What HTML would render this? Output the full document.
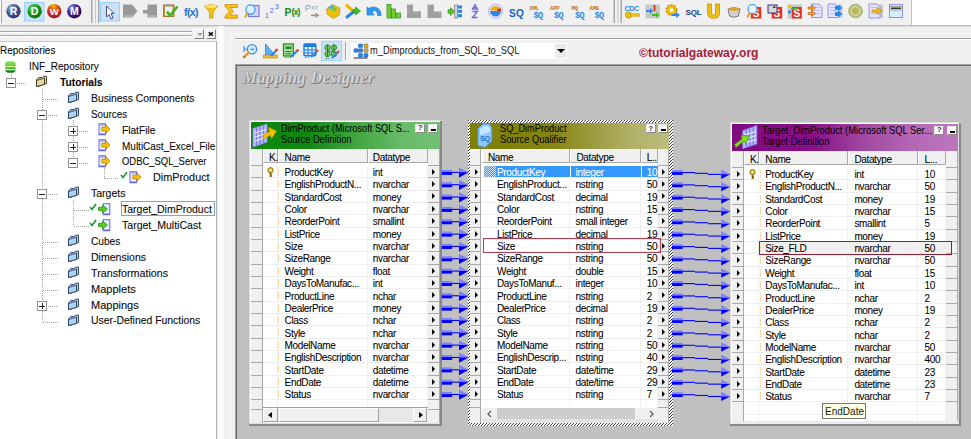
<!DOCTYPE html>
<html><head><meta charset="utf-8"><style>
*{margin:0;padding:0;box-sizing:border-box}
html,body{width:971px;height:439px;overflow:hidden}
body{background:#f0f0f0;position:relative;font-family:"Liberation Sans",sans-serif;color:#000}
.a{position:absolute}
.t{position:absolute;white-space:nowrap;line-height:1}
.tree{font-size:11px;letter-spacing:-0.3px;color:#1a1a1a}
.cell{font-size:10px;letter-spacing:-0.35px;color:#000;-webkit-text-stroke-width:0.07px}
.dh{position:absolute;height:1px;background-image:linear-gradient(90deg,#a0a0a0 50%,transparent 50%);background-size:2px 1px}
.dv{position:absolute;width:1px;background-image:linear-gradient(180deg,#a0a0a0 50%,transparent 50%);background-size:1px 2px}
</style></head>
<body>
<div class="a" style="left:0;top:0;width:912px;height:25px;background:#f0f0f0;border-right:1px solid #c4c4c4"></div>
<div class="a" style="left:912px;top:0;width:59px;height:25px;background:#fff"></div>
<div class="a" style="left:0;top:25px;width:971px;height:2px;background:#d8d8d8;border-top:1px solid #bcbcbc"></div>
<div class="a" style="left:0;top:0;width:2px;height:23px;border-right:1px solid #a8a8a8;background:#fafafa"></div>
<svg class="a" style="left:0;top:0" width="971" height="25"><defs><radialGradient id="bR" cx="35%" cy="30%" r="75%"><stop offset="0" stop-color="#a0b0d8"/><stop offset="0.5" stop-color="#4a5a9c"/><stop offset="1" stop-color="#2a3470"/></radialGradient><radialGradient id="bD" cx="35%" cy="30%" r="75%"><stop offset="0" stop-color="#60d060"/><stop offset="0.5" stop-color="#1a9a1a"/><stop offset="1" stop-color="#0a6a0a"/></radialGradient><radialGradient id="bW" cx="45%" cy="15%" r="80%"><stop offset="0" stop-color="#f0c000"/><stop offset="0.45" stop-color="#e04010"/><stop offset="1" stop-color="#a01830"/></radialGradient><radialGradient id="bM" cx="30%" cy="25%" r="80%"><stop offset="0" stop-color="#8090f0"/><stop offset="0.5" stop-color="#40208a"/><stop offset="1" stop-color="#2a0a5a"/></radialGradient></defs><rect x="24.5" y="2.5" width="19.5" height="18.5" fill="#c9e0f7" stroke="#99d1ff"/><rect x="100.5" y="2.5" width="19" height="18.5" fill="#c9e0f7" stroke="#99d1ff"/><circle cx="13.5" cy="11.2" r="7.2" fill="url(#bR)"/><text x="13.5" y="15.3" text-anchor="middle" font-family="Liberation Sans" font-weight="bold" font-size="10.5" fill="#fff">R</text><circle cx="34.6" cy="11.2" r="7.2" fill="url(#bD)"/><text x="34.6" y="15.3" text-anchor="middle" font-family="Liberation Sans" font-weight="bold" font-size="10.5" fill="#fff">D</text><circle cx="54.2" cy="11.2" r="7.2" fill="url(#bW)"/><text x="54.2" y="15.3" text-anchor="middle" font-family="Liberation Sans" font-weight="bold" font-size="9.5" fill="#fff">W</text><circle cx="74.3" cy="11.2" r="7.2" fill="url(#bM)"/><text x="74.3" y="15.3" text-anchor="middle" font-family="Liberation Sans" font-weight="bold" font-size="10.5" fill="#fff">M</text><rect x="91" y="0" width="1.5" height="23" fill="#a8a8a8"/><rect x="98" y="0" width="1.5" height="23" fill="#a8a8a8"/><rect x="613.5" y="0" width="1.5" height="23" fill="#a8a8a8"/><rect x="620.5" y="0" width="1.5" height="23" fill="#a8a8a8"/><rect x="95" y="0" width="1" height="23" fill="#c8c8c8"/><rect x="617.5" y="0" width="1" height="23" fill="#c8c8c8"/><path d="M106.5 6 L106.5 17 L109 14.5 L111 19 L113 18 L111 13.5 L114 13.5 Z" fill="#fff" stroke="#3a3a7a" stroke-width="0.9"/><path d="M123 4.5 H132 L137.5 11 L132 17.5 H123 Z" fill="#999"/><rect x="125" y="15.5" width="1.5" height="1" fill="#eee"/><rect x="127.5" y="15.5" width="1.5" height="1" fill="#eee"/><rect x="130" y="15.5" width="1.5" height="1" fill="#eee"/><path d="M147.5 4.5 H157 V17.5 H147.5 V13.5 H143 V10 H147.5 Z" fill="#999"/><rect x="149" y="15.5" width="1.5" height="1" fill="#eee"/><rect x="151.5" y="15.5" width="1.5" height="1" fill="#eee"/><rect x="154" y="15.5" width="1.5" height="1" fill="#eee"/><rect x="163.5" y="5" width="10.5" height="11.5" fill="#d89030" stroke="#a06010" stroke-width="0.8"/><rect x="165" y="6.5" width="7.5" height="9" fill="#e8f4ff"/><rect x="166" y="4" width="5.5" height="2.5" fill="#a0a0a0"/><path d="M167 11.5 L170 15.5 L177.5 6.5" fill="none" stroke="#40b020" stroke-width="2.6"/><text x="184" y="15.5" font-family="Liberation Sans" font-weight="bold" font-size="10.5" fill="#1a6fd8" letter-spacing="-0.6">f(x)</text><path d="M204.5 6 Q211 3 218 6 L213 12 V18 H209.5 V12 Z" fill="#f2c21a" stroke="#c09000" stroke-width="0.7"/><ellipse cx="211.2" cy="6.3" rx="6" ry="1.8" fill="#ffe070"/><path d="M225 4.5 H237.5 V7.5 H230 L233.5 11.3 L230 15 H237.5 V18.2 H225 V16 L229.5 11.3 L225 6.5 Z" fill="#f5c518" stroke="#d08000" stroke-width="0.7"/><rect x="248.5" y="5.5" width="10.5" height="11" fill="#d8d8ff" stroke="#7878f0" stroke-width="1.2"/><circle cx="250.5" cy="9.5" r="4.6" fill="#d8f0ff" stroke="#3a98f0" stroke-width="1.2"/><path d="M247.5 12.5 L245 17.5" stroke="#e0a020" stroke-width="2"/><text x="265" y="18" font-family="Liberation Sans" font-size="7" fill="#6060e0">1</text><text x="269.8" y="13.3" font-family="Liberation Sans" font-size="7" fill="#6060e0">2</text><text x="275" y="9" font-family="Liberation Sans" font-size="7" fill="#6060e0">3</text><text x="284.5" y="15.6" font-family="Liberation Sans" font-weight="bold" font-size="10.5" fill="#1a8a1a">P</text><text x="291.5" y="15.3" font-family="Liberation Sans" font-weight="bold" font-size="9" fill="#1a8a1a" letter-spacing="-1">(x)</text><text x="305" y="10.8" font-family="Liberation Sans" font-size="8.5" fill="#9a9a9a">P</text><text x="311" y="10" font-family="Liberation Sans" font-size="5.5" fill="#9a9a9a">XT</text><path d="M311 14.5 H315.5 V12.5 L319.5 15.3 L315.5 18 V16.2 H311 Z" fill="#9a9a9a"/><path d="M326.5 9 L332 4.5 L340 8 L339.5 15 L333 18.5 L327 14 Z" fill="#f0c010" stroke="#c08800" stroke-width="0.6"/><path d="M328 8 L332 5 L334.5 6 L331 9.5 Z" fill="#4aa8f0"/><path d="M333 7 L337 8.5 L335 12 L331.5 10.5 Z" fill="#70d030"/><path d="M347 5.5 L354 12" stroke="#f0b800" stroke-width="3.2" stroke-linecap="round"/><path d="M347 17 L354 11.5" stroke="#2a88e8" stroke-width="3.2" stroke-linecap="round"/><path d="M353 9.5 H355.5 V7 L360.5 11 L355.5 15 V12.5 H353 Z" fill="#40c020" stroke="#1a7a10" stroke-width="0.6"/><path d="M381 15.5 Q381 7 373 7 Q370 7 369.5 8.5 L367 7 V15 H374.5 L372 13 Q372.5 10.5 374.5 10.5 Q377.5 10.5 377.5 15.5 Z" fill="#2a98f0" stroke="#1a70d0" stroke-width="0.6"/><rect x="387" y="4.5" width="4" height="13.5" fill="#70d030" stroke="#2a8a10" stroke-width="0.7"/><rect x="391.5" y="9" width="4" height="9" fill="#70d030" stroke="#2a8a10" stroke-width="0.7"/><rect x="396" y="13" width="4.5" height="5" fill="#70d030" stroke="#2a8a10" stroke-width="0.7"/><path d="M407 4.5 H413 V11.5 H418 L419.5 10.5 L421 12 V18 H407 Z" fill="#a0a0a0"/><path d="M427.5 4.5 H434 V11.5 H441.5 V18 H427.5 Z" fill="#a0a0a0"/><path d="M448 9.8 H450.5 V7.5 L454.5 11.5 L450.5 15.5 V13.3 H448 Z" fill="#50c820" stroke="#1a8a10" stroke-width="0.6"/><rect x="454.5" y="5" width="3.2" height="13" fill="#d0d0d0" stroke="#707070" stroke-width="0.6"/><rect x="457.8" y="5.5" width="4.2" height="3" fill="#2a88e8"/><rect x="457.8" y="9.8" width="4.2" height="3" fill="#2a88e8"/><rect x="457.8" y="14.2" width="4.2" height="3" fill="#2a88e8"/><path d="M472.5 9 L475 4.5 L477.5 9 Z" fill="none" stroke="#6a6ad8" stroke-width="1.3"/><rect x="473" y="7" width="4" height="1" fill="#6a6ad8"/><path d="M472.5 11.5 H477.5 L472.5 17.5 H477.5" fill="none" stroke="#6a6ad8" stroke-width="1.3"/><circle cx="495.5" cy="11.2" r="7" fill="#e8e8ff" stroke="#b0b0ff" stroke-width="1"/><path d="M490 10.5 Q491 6 495.5 6 Q500 6 501 10.5 Z" fill="#f0b010"/><path d="M497 9 L501 8.5 L501 11.5 L497 11 Z" fill="#e03010"/><path d="M490 11 H501 Q500.5 16 495.5 16.5 Q490.5 16 490 11 Z" fill="#2a88e8"/><text x="509" y="16.5" font-family="Liberation Sans" font-weight="bold" font-size="10" fill="#1060c8" letter-spacing="0.3">SQ</text><text x="529.5" y="9.8" font-family="Liberation Mono" font-weight="bold" font-size="5.6" fill="#c07020" letter-spacing="-0.2">XML</text><text x="533.5" y="17.6" font-family="Liberation Mono" font-weight="bold" font-size="8.5" fill="#2a88e0" letter-spacing="-0.5">$Q</text><text x="550" y="9.8" font-family="Liberation Mono" font-weight="bold" font-size="5.6" fill="#c07020" letter-spacing="-0.2">APP</text><text x="554" y="17.6" font-family="Liberation Mono" font-weight="bold" font-size="8.5" fill="#2a88e0" letter-spacing="-0.5">$Q</text><text x="571.5" y="9.8" font-family="Liberation Mono" font-weight="bold" font-size="5.6" fill="#c07020" letter-spacing="-0.2">MQ</text><text x="575" y="17.6" font-family="Liberation Mono" font-weight="bold" font-size="8.5" fill="#2a88e0" letter-spacing="-0.5">$Q</text><text x="589.5" y="9.8" font-family="Liberation Mono" font-weight="bold" font-size="5.6" fill="#c07020" letter-spacing="-0.2">AMG</text><text x="594.5" y="17.6" font-family="Liberation Mono" font-weight="bold" font-size="8.5" fill="#2a88e0" letter-spacing="-0.5">$Q</text><text x="624.5" y="10.5" font-family="Liberation Sans" font-weight="bold" font-size="7" fill="#2a80e0" letter-spacing="-0.3">CDC</text><circle cx="628.5" cy="15" r="3.2" fill="#f0c010" stroke="#c08800" stroke-width="0.6"/><rect x="631" y="13.8" width="8.5" height="2.4" fill="#f0c010" stroke="#c08800" stroke-width="0.5"/><rect x="645.5" y="4.5" width="14.5" height="13.8" fill="#c8c8c8"/><path d="M646 10 H650 V8 L653 11 L650 14 V12 H646 Z" fill="#2a88e8"/><path d="M654.5 5 V11" stroke="#e03010" stroke-width="1.8"/><path d="M652 14 H656 V12 L659.5 15 L656 18 V16 H652 Z" fill="#40c020"/><circle cx="671.5" cy="10" r="5.2" fill="#f0c010" stroke="#c08800" stroke-width="1.4" stroke-dasharray="2 1.3"/><circle cx="671.5" cy="10" r="1.8" fill="#fff"/><path d="M672 14 H676 V12 L680 15 L676 18 V16 H672 Z" fill="#2a88e8"/><text x="685.5" y="14.8" font-family="Liberation Sans" font-weight="bold" font-size="8" fill="#1a3a8a" letter-spacing="-0.2">SQL</text><path d="M707.5 4 H711.5 V13.5 Q711.5 15 713.5 15 Q715.5 15 715.5 13.5 V4 H719.5 V13 Q719.5 18.3 713.5 18.3 Q707.5 18.3 707.5 13 Z" fill="#f0c010" stroke="#c08800" stroke-width="0.7"/><path d="M728 9 Q734 6 740 9 L738.5 16 Q734 18.5 729.5 16 Z" fill="#d0d0d0" stroke="#606060" stroke-width="0.8"/><ellipse cx="734" cy="9" rx="5" ry="1.8" fill="#e0a020"/><rect x="750.8" y="7" width="10.5" height="11.5" fill="#e83020"/><text x="756.05" y="17.0" text-anchor="middle" font-family="Liberation Sans" font-weight="bold" font-size="10" fill="#fff">S</text><circle cx="752.5" cy="9" r="4.5" fill="#e8f4ff" stroke="#3a98f0" stroke-width="1.2"/><path d="M749.5 12.5 L747.5 17.5" stroke="#e0a020" stroke-width="2"/><rect x="771.7" y="7" width="10.5" height="11.5" fill="#e83020"/><text x="776.95" y="17.0" text-anchor="middle" font-family="Liberation Sans" font-weight="bold" font-size="10" fill="#fff">S</text><rect x="768" y="5" width="9" height="8" fill="#d8d8d8" stroke="#30307a" stroke-width="1"/><rect x="773" y="6.5" width="2.5" height="1.2" fill="#000"/><rect x="787.7" y="4.5" width="14" height="14" fill="#c8c8c8"/><rect x="791.8" y="7" width="10" height="11.5" fill="#e83020"/><text x="796.8" y="17.0" text-anchor="middle" font-family="Liberation Sans" font-weight="bold" font-size="10" fill="#fff">S</text><circle cx="789.5" cy="6.5" r="1.8" fill="#f0c010"/><circle cx="789.5" cy="12" r="1.8" fill="#2a98f0"/><path d="M791 8 H795 V6 L798 8.5 L795 11 V9.5 H791 Z" fill="#40c020"/><path d="M811.5 4 H819.0 L822.0 7 V17.5 H811.5 Z" fill="#e4e4ff" stroke="#8a8ae8" stroke-width="0.9"/><rect x="813.5" y="7.0" width="6.5" height="0.8" fill="#b0b0f0"/><rect x="813.5" y="10.2" width="6.5" height="0.8" fill="#b0b0f0"/><rect x="813.5" y="13.4" width="6.5" height="0.8" fill="#b0b0f0"/><path d="M808 7 H812 V5.3 L815.5 8 L812 10.7 V9 H808 Z" fill="#f0b010" stroke="#c03010" stroke-width="0.5"/><path d="M808 12.5 H812 V10.8 L815.5 13.5 L812 16.2 V14.5 H808 Z" fill="#f0b010" stroke="#c03010" stroke-width="0.5"/><path d="M828 4 H835.5 L838.5 7 V17.5 H828 Z" fill="#e4e4ff" stroke="#8a8ae8" stroke-width="0.9"/><rect x="830" y="7.0" width="6.5" height="0.8" fill="#b0b0f0"/><rect x="830" y="10.2" width="6.5" height="0.8" fill="#b0b0f0"/><rect x="830" y="13.4" width="6.5" height="0.8" fill="#b0b0f0"/><rect x="838.5" y="4.5" width="4" height="13" fill="#c8c8c8"/><path d="M835 6 H838 V4.5 L842.5 8 L838 11.3 V9.8 H835 Z" fill="#2a88e8"/><path d="M835 12 H838 V10.5 L842.5 14 L838 17.5 V16 H835 Z" fill="#2a88e8"/><circle cx="855.5" cy="11" r="6.8" fill="#c0c080" stroke="#a0b070" stroke-width="1"/><circle cx="855.5" cy="11" r="4.2" fill="#b8b860" stroke="#f0f0d0" stroke-width="0.7"/><rect x="877" y="4.5" width="6" height="13.5" fill="#c8c8c8"/><path d="M869 4 H877 L880 7 V18 H869 Z" fill="#e4e4ff" stroke="#8a8ae8" stroke-width="0.9"/><rect x="871" y="7.0" width="7" height="0.8" fill="#b0b0f0"/><rect x="871" y="10.2" width="7" height="0.8" fill="#b0b0f0"/><rect x="871" y="13.4" width="7" height="0.8" fill="#b0b0f0"/><path d="M872 10 H877 V7.5 L882.5 11 L877 14.5 V12.3 H872 Z" fill="#f0b810" stroke="#c08000" stroke-width="0.5"/><rect x="889.5" y="4.5" width="13" height="13" fill="#d4ecfc" stroke="#8a8ae8" stroke-width="0.9"/><rect x="889.5" y="6.5" width="13" height="3.5" fill="#e8e8e8" stroke="#707070" stroke-width="0.6"/><rect x="891" y="7.5" width="10" height="1.5" fill="#303030"/></svg>
<div class="a" style="left:0;top:31px;width:192px;height:2px;border-top:1px solid #a8a8a8;border-bottom:1px solid #fff"></div>
<div class="a" style="left:0;top:35px;width:192px;height:2px;border-top:1px solid #a8a8a8;border-bottom:1px solid #fff"></div>
<div class="a" style="left:194px;top:29px;width:10px;height:10px;background:#f0f0f0;border-right:1px solid #808080;border-bottom:1px solid #808080;border-left:1px solid #fff;border-top:1px solid #fff"></div>
<div class="a" style="left:197px;top:33px;width:0;height:0;border-left:3px solid transparent;border-right:3px solid transparent;border-top:3px solid #a0a0a0"></div>
<div class="a" style="left:206px;top:29px;width:10px;height:10px;background:#f0f0f0;border-right:1px solid #808080;border-bottom:1px solid #808080;border-left:1px solid #fff;border-top:1px solid #fff"></div>
<svg class="a" style="left:207px;top:30px" width="8" height="8" viewBox="0 0 8 8"><path d="M1.8 2.2 L5.8 5.8 M5.8 2.2 L1.8 5.8" stroke="#000" stroke-width="1.5"/></svg>
<div class="a" style="left:0;top:41px;width:217px;height:398px;background:#fff;border-top:1px solid #c8c8c8;border-right:1px solid #b0b0b0"></div>
<div class="a" style="left:218px;top:26px;width:6px;height:413px;background:#fbfbfb"></div>
<div class="a" style="left:230px;top:33px;width:741px;height:406px;background:#f0f0f0;border-left:1px solid #fafafa;border-top:1px solid #fafafa"></div>
<div class="a" style="left:235px;top:38px;width:736px;height:1px;background:#a0a0a0"></div>
<div class="a" style="left:235px;top:39px;width:736px;height:1px;background:#fff"></div>
<div class="a" style="left:345px;top:42px;width:2px;height:18px;border-left:1px solid #a0a0a0;border-right:1px solid #fff"></div>
<div class="a" style="left:351px;top:43px;width:216px;height:16px;background:#fff"></div>
<div class="a" style="left:555px;top:44px;width:11px;height:14px;background:#eaeaea"></div>
<div class="a" style="left:557px;top:49px;width:0;height:0;border-left:4px solid transparent;border-right:4px solid transparent;border-top:4px solid #000"></div>
<div class="t" style="left:369.50px;top:45.00px;font-size:11px;transform:scaleX(0.8461);transform-origin:0 0;color:#111">m_Dimproducts_from_SQL_to_SQL</div>
<div class="t" style="left:638.50px;top:46.00px;font-size:13px;transform:scaleX(0.9298);transform-origin:0 0;color:#a3203c;font-weight:bold">&copy;tutorialgateway.org</div>
<svg class="a" style="left:0;top:0" width="971" height="64"><circle cx="252" cy="49.3" r="4.6" fill="#d8f0ff" stroke="#3a8ae0" stroke-width="1.3"/><path d="M250 49.3 H253.5 M252.2 47.8 L253.8 49.3 L252.2 50.8" stroke="#3a8ae0" stroke-width="0.9" fill="none"/><rect x="243.5" y="46" width="1.2" height="6" fill="#3a8ae0"/><rect x="244" y="48.8" width="3.5" height="1" fill="#3a8ae0"/><path d="M243.5 57.5 L249.5 52" stroke="#e0a020" stroke-width="2.4"/><path d="M243.2 57.8 L244.5 56.5" stroke="#7a6a30" stroke-width="1.2"/><path d="M265.5 44 V55 H274.5 Z" fill="#60b0f8" stroke="#2a80e0" stroke-width="0.8"/><rect x="263.5" y="55" width="14" height="3" fill="#f0c030" stroke="#c08000" stroke-width="0.6"/><path d="M271 56 L277 49.5" stroke="#2a88e8" stroke-width="2.2"/><path d="M275.5 51 L277.5 49" stroke="#e05020" stroke-width="2.2"/><rect x="283.5" y="44" width="9.8" height="12" fill="#a8e0a0" stroke="#1a8a1a" stroke-width="1.2"/><rect x="285.5" y="46.5" width="5.8" height="2.5" fill="#1a8a1a"/><rect x="285.5" y="51" width="5.8" height="1" fill="#1a8a1a"/><rect x="285.5" y="53.3" width="5.8" height="1" fill="#1a8a1a"/><path d="M291.5 56.5 L298 50" stroke="#2a88e8" stroke-width="2.2"/><path d="M296.5 51.5 L298.5 49.5" stroke="#e05020" stroke-width="2.2"/><rect x="285" y="57" width="1" height="1" fill="#666"/><rect x="287.5" y="57" width="1" height="1" fill="#666"/><rect x="290" y="57" width="1" height="1" fill="#333"/><rect x="304" y="44" width="11.8" height="11.8" rx="1" fill="#e8f0ff" stroke="#1a7ae0" stroke-width="1.4"/><rect x="304" y="44" width="11.8" height="3" fill="#1a7ae0"/><path d="M304 50 H316 M304 53 H316 M308 47 V56 M312 47 V56" stroke="#1a7ae0" stroke-width="1"/><path d="M311 57 L317.5 50.5" stroke="#2a88e8" stroke-width="2.2"/><path d="M316 52 L318 50" stroke="#e05020" stroke-width="2.2"/><rect x="305" y="57" width="1" height="1" fill="#666"/><rect x="307.5" y="57" width="1" height="1" fill="#666"/><rect x="321.7" y="41.3" width="20" height="19.3" fill="#c9e0f7" stroke="#99d1ff" stroke-width="1"/><circle cx="327.5" cy="47.5" r="2.6" fill="#80d060" stroke="#1a8a1a" stroke-width="1"/><circle cx="334" cy="47.5" r="2.6" fill="#80d060" stroke="#1a8a1a" stroke-width="1"/><circle cx="327.5" cy="54" r="2.6" fill="#80d060" stroke="#1a8a1a" stroke-width="1"/><circle cx="334" cy="54" r="2.6" fill="#80d060" stroke="#1a8a1a" stroke-width="1"/><path d="M327.5 44.5 V57 M334 44.5 V53 M327.5 51 H334" stroke="#1a8a1a" stroke-width="1"/><path d="M332 58 L338.5 51.5" stroke="#2a88e8" stroke-width="2.2"/><path d="M337 53 L339 51" stroke="#e05020" stroke-width="2.2"/><rect x="326" y="58" width="1" height="1" fill="#333"/><rect x="328.5" y="58" width="1" height="1" fill="#666"/><rect x="354.5" y="52" width="13.5" height="6" fill="none"/><rect x="358.5" y="44.0" width="4" height="3.6" rx="0.6" fill="#2a88e8" stroke="#1a58a8" stroke-width="0.5"/><rect x="364" y="44.0" width="4" height="3.6" rx="0.6" fill="#f0b010" stroke="#1a58a8" stroke-width="0.5"/><rect x="354" y="48.7" width="4" height="3.6" rx="0.6" fill="#2a88e8" stroke="#1a58a8" stroke-width="0.5"/><rect x="358.5" y="48.7" width="4" height="3.6" rx="0.6" fill="#2a88e8" stroke="#1a58a8" stroke-width="0.5"/><rect x="364" y="48.7" width="4" height="3.6" rx="0.6" fill="#f0b010" stroke="#1a58a8" stroke-width="0.5"/><rect x="358.5" y="53.400000000000006" width="4" height="3.6" rx="0.6" fill="#2a88e8" stroke="#1a58a8" stroke-width="0.5"/><rect x="364" y="53.400000000000006" width="4" height="3.6" rx="0.6" fill="#2a88e8" stroke="#1a58a8" stroke-width="0.5"/><rect x="353.5" y="57.5" width="14" height="1" fill="#222"/></svg>
<div class="a" style="left:235px;top:64px;width:736px;height:375px;background:#c0c0c0;border-left:1px solid #a0a0a0;border-top:1px solid #a0a0a0"></div>
<div class="a" style="left:236px;top:65px;width:735px;height:374px;border-left:1px solid #696969;border-top:1px solid #696969"></div>
<div class="t" style="left:242.5px;top:70px;font-family:'Liberation Serif',serif;font-style:italic;font-weight:bold;font-size:16px;letter-spacing:0.55px;color:#dedede;-webkit-text-stroke:0.3px #9a9a9a;text-shadow:1px 1px 0 #7a7a7a">Mapping Designer</div>
<div class="dv" style="left:11px;top:72px;height:6px"></div>
<div class="dv" style="left:42px;top:89px;height:232.6px"></div>
<div class="dv" style="left:73px;top:120px;height:42.6px"></div>
<div class="dv" style="left:104px;top:168px;height:10.5px"></div>
<div class="dv" style="left:73px;top:200px;height:26.2px"></div>
<div class="t" style="left:-0.30px;top:45.10px;font-size:11px;transform:scaleX(0.9061);transform-origin:0 0;color:#0a0a0a;-webkit-text-stroke-width:0.1px;font-weight:normal">Repositories</div>
<div class="t" style="left:29.20px;top:61.00px;font-size:11px;transform:scaleX(0.9134);transform-origin:0 0;color:#0a0a0a;-webkit-text-stroke-width:0.1px;font-weight:normal">INF_Repository</div>
<svg class="a" style="left:5px;top:61px" width="11" height="12" viewBox="0 0 11 12"><ellipse cx="5.5" cy="9.5" rx="5" ry="2.3" fill="#1e7a1e"/><rect x="0.5" y="2.5" width="10" height="7" fill="#3cb43c"/><rect x="0.5" y="5" width="10" height="1.2" fill="#e8f5a0"/><rect x="0.5" y="8" width="10" height="1.2" fill="#e8f5a0"/><ellipse cx="5.5" cy="2.5" rx="5" ry="2.2" fill="#7ad84a"/></svg>
<div class="t" style="left:60.20px;top:76.90px;font-size:11px;transform:scaleX(0.9313);transform-origin:0 0;color:#0a0a0a;-webkit-text-stroke-width:0.1px;font-weight:bold">Tutorials</div>
<div class="a" style="left:6px;top:78px;width:10px;height:10px;border:1px solid #939393;background:#fff"></div><div class="a" style="left:8px;top:82.5px;width:6px;height:1px;background:#222"></div>
<div class="dh" style="left:17px;top:83px;width:10px"></div>
<svg class="a" style="left:35px;top:75.1px" width="13" height="13" viewBox="0 0 13 13"><path d="M1.5 4.5 L4 2.5 L7 2.5 L8 1.5 L11.5 1 L11.5 8.5 L3 11.5 L1.5 11.5 Z" fill="#e4d9a0" stroke="#3a3420" stroke-width="0.9"/><path d="M1.5 5.5 L9.5 3 L9.5 9.5 L1.5 11.5 Z" fill="#e4d9a0" stroke="#3a3420" stroke-width="0.9"/></svg>
<div class="t" style="left:90.70px;top:92.80px;font-size:11px;transform:scaleX(0.9386);transform-origin:0 0;color:#0a0a0a;-webkit-text-stroke-width:0.1px;font-weight:normal">Business Components</div>
<div class="dh" style="left:43px;top:99px;width:15px"></div>
<svg class="a" style="left:67px;top:91.0px" width="13" height="13" viewBox="0 0 13 13"><path d="M1.5 4.5 L4 2.5 L7 2.5 L8 1.5 L11.5 1 L11.5 8.5 L3 11.5 L1.5 11.5 Z" fill="#a9d3f5" stroke="#2a3a5a" stroke-width="0.9"/><path d="M1.5 5.5 L9.5 3 L9.5 9.5 L1.5 11.5 Z" fill="#a9d3f5" stroke="#2a3a5a" stroke-width="0.9"/></svg>
<div class="t" style="left:90.70px;top:108.70px;font-size:11px;transform:scaleX(0.8946);transform-origin:0 0;color:#0a0a0a;-webkit-text-stroke-width:0.1px;font-weight:normal">Sources</div>
<div class="a" style="left:37px;top:110px;width:10px;height:10px;border:1px solid #939393;background:#fff"></div><div class="a" style="left:39px;top:114.5px;width:6px;height:1px;background:#222"></div>
<div class="dh" style="left:48px;top:115px;width:10px"></div>
<svg class="a" style="left:67px;top:106.9px" width="13" height="13" viewBox="0 0 13 13"><path d="M1.5 4.5 L4 2.5 L7 2.5 L8 1.5 L11.5 1 L11.5 8.5 L3 11.5 L1.5 11.5 Z" fill="#a9d3f5" stroke="#2a3a5a" stroke-width="0.9"/><path d="M1.5 5.5 L9.5 3 L9.5 9.5 L1.5 11.5 Z" fill="#a9d3f5" stroke="#2a3a5a" stroke-width="0.9"/></svg>
<div class="t" style="left:121.70px;top:124.60px;font-size:11px;transform:scaleX(0.9234);transform-origin:0 0;color:#0a0a0a;-webkit-text-stroke-width:0.1px;font-weight:normal">FlatFile</div>
<div class="a" style="left:68px;top:126px;width:10px;height:10px;border:1px solid #939393;background:#fff"></div><div class="a" style="left:70px;top:130.5px;width:6px;height:1px;background:#222"></div><div class="a" style="left:72.5px;top:128px;width:1px;height:6px;background:#222"></div>
<div class="dh" style="left:79px;top:131px;width:10px"></div>
<svg class="a" style="left:97.5px;top:123.20000000000002px" width="13" height="13" viewBox="0 0 13 13"><rect x="1" y="0.7" width="6.6" height="11" fill="#e8f4ff" stroke="#7272ea" stroke-width="1.1"/><rect x="1" y="10.6" width="6.6" height="1.2" fill="#5a5ad8"/><path d="M2 1.3 H7 M2 2.3 H7" stroke="#8a8aee" stroke-width="0.6"/><path d="M3.8 4 H8 V1.8 L12 6 L8 10.2 V8 H3.8 Z" fill="#f4c010" stroke="#c07a00" stroke-width="0.7"/></svg>
<div class="t" style="left:121.70px;top:140.50px;font-size:11px;transform:scaleX(0.9084);transform-origin:0 0;color:#0a0a0a;-webkit-text-stroke-width:0.1px;font-weight:normal">MultiCast_Excel_File</div>
<div class="a" style="left:68px;top:142px;width:10px;height:10px;border:1px solid #939393;background:#fff"></div><div class="a" style="left:70px;top:146.5px;width:6px;height:1px;background:#222"></div><div class="a" style="left:72.5px;top:144px;width:1px;height:6px;background:#222"></div>
<div class="dh" style="left:79px;top:147px;width:10px"></div>
<svg class="a" style="left:97.5px;top:139.1px" width="13" height="13" viewBox="0 0 13 13"><rect x="1" y="0.7" width="6.6" height="11" fill="#e8f4ff" stroke="#7272ea" stroke-width="1.1"/><rect x="1" y="10.6" width="6.6" height="1.2" fill="#5a5ad8"/><path d="M2 1.3 H7 M2 2.3 H7" stroke="#8a8aee" stroke-width="0.6"/><path d="M3.8 4 H8 V1.8 L12 6 L8 10.2 V8 H3.8 Z" fill="#f4c010" stroke="#c07a00" stroke-width="0.7"/></svg>
<div class="t" style="left:121.70px;top:156.40px;font-size:11px;transform:scaleX(0.8575);transform-origin:0 0;color:#0a0a0a;-webkit-text-stroke-width:0.1px;font-weight:normal">ODBC_SQL_Server</div>
<div class="a" style="left:68px;top:158px;width:10px;height:10px;border:1px solid #939393;background:#fff"></div><div class="a" style="left:70px;top:162.5px;width:6px;height:1px;background:#222"></div>
<div class="dh" style="left:79px;top:163px;width:10px"></div>
<svg class="a" style="left:97.5px;top:155.0px" width="13" height="13" viewBox="0 0 13 13"><rect x="1" y="0.7" width="6.6" height="11" fill="#e8f4ff" stroke="#7272ea" stroke-width="1.1"/><rect x="1" y="10.6" width="6.6" height="1.2" fill="#5a5ad8"/><path d="M2 1.3 H7 M2 2.3 H7" stroke="#8a8aee" stroke-width="0.6"/><path d="M3.8 4 H8 V1.8 L12 6 L8 10.2 V8 H3.8 Z" fill="#f4c010" stroke="#c07a00" stroke-width="0.7"/></svg>
<div class="t" style="left:152.70px;top:172.30px;font-size:11px;transform:scaleX(0.9850);transform-origin:0 0;color:#0a0a0a;-webkit-text-stroke-width:0.1px;font-weight:normal">DimProduct</div>
<div class="dh" style="left:105px;top:178px;width:14px"></div>
<svg class="a" style="left:119.5px;top:170.9px" width="8" height="8" viewBox="0 0 8 8"><path d="M1 4 L3 6.5 L7 1" fill="none" stroke="#1a9a2a" stroke-width="1.6"/></svg>
<svg class="a" style="left:128.5px;top:170.9px" width="13" height="13" viewBox="0 0 13 13"><rect x="1" y="0.7" width="6.6" height="11" fill="#e8f4ff" stroke="#7272ea" stroke-width="1.1"/><rect x="1" y="10.6" width="6.6" height="1.2" fill="#5a5ad8"/><path d="M2 1.3 H7 M2 2.3 H7" stroke="#8a8aee" stroke-width="0.6"/><path d="M3.8 4 H8 V1.8 L12 6 L8 10.2 V8 H3.8 Z" fill="#f4c010" stroke="#c07a00" stroke-width="0.7"/></svg>
<div class="t" style="left:90.70px;top:188.20px;font-size:11px;transform:scaleX(0.9564);transform-origin:0 0;color:#0a0a0a;-webkit-text-stroke-width:0.1px;font-weight:normal">Targets</div>
<div class="a" style="left:37px;top:189px;width:10px;height:10px;border:1px solid #939393;background:#fff"></div><div class="a" style="left:39px;top:193.5px;width:6px;height:1px;background:#222"></div>
<div class="dh" style="left:48px;top:194px;width:10px"></div>
<svg class="a" style="left:67px;top:186.4px" width="13" height="13" viewBox="0 0 13 13"><path d="M1.5 4.5 L4 2.5 L7 2.5 L8 1.5 L11.5 1 L11.5 8.5 L3 11.5 L1.5 11.5 Z" fill="#a9d3f5" stroke="#2a3a5a" stroke-width="0.9"/><path d="M1.5 5.5 L9.5 3 L9.5 9.5 L1.5 11.5 Z" fill="#a9d3f5" stroke="#2a3a5a" stroke-width="0.9"/></svg>
<div class="t" style="left:121.70px;top:204.10px;font-size:11px;transform:scaleX(0.9538);transform-origin:0 0;color:#0a0a0a;-webkit-text-stroke-width:0.1px;font-weight:normal">Target_DimProduct</div>
<div class="dh" style="left:74px;top:210px;width:15px"></div>
<svg class="a" style="left:88.5px;top:202.70000000000002px" width="8" height="8" viewBox="0 0 8 8"><path d="M1 4 L3 6.5 L7 1" fill="none" stroke="#1a9a2a" stroke-width="1.6"/></svg>
<svg class="a" style="left:97.5px;top:202.70000000000002px" width="13" height="13" viewBox="0 0 13 13"><rect x="5.2" y="0.7" width="6.6" height="11" fill="#e8f4ff" stroke="#7272ea" stroke-width="1.1"/><rect x="5.2" y="10.6" width="6.6" height="1.2" fill="#5a5ad8"/><path d="M0.5 4.3 H4.5 V2 L9.5 6 L4.5 10 V7.7 H0.5 Z" fill="#5cc820" stroke="#1a8a10" stroke-width="0.7"/></svg>
<div class="t" style="left:121.70px;top:220.00px;font-size:11px;transform:scaleX(0.9584);transform-origin:0 0;color:#0a0a0a;-webkit-text-stroke-width:0.1px;font-weight:normal">Target_MultiCast</div>
<div class="dh" style="left:74px;top:226px;width:15px"></div>
<svg class="a" style="left:88.5px;top:218.6px" width="8" height="8" viewBox="0 0 8 8"><path d="M1 4 L3 6.5 L7 1" fill="none" stroke="#1a9a2a" stroke-width="1.6"/></svg>
<svg class="a" style="left:97.5px;top:218.6px" width="13" height="13" viewBox="0 0 13 13"><rect x="5.2" y="0.7" width="6.6" height="11" fill="#e8f4ff" stroke="#7272ea" stroke-width="1.1"/><rect x="5.2" y="10.6" width="6.6" height="1.2" fill="#5a5ad8"/><path d="M0.5 4.3 H4.5 V2 L9.5 6 L4.5 10 V7.7 H0.5 Z" fill="#5cc820" stroke="#1a8a10" stroke-width="0.7"/></svg>
<div class="t" style="left:90.70px;top:235.90px;font-size:11px;transform:scaleX(0.9214);transform-origin:0 0;color:#0a0a0a;-webkit-text-stroke-width:0.1px;font-weight:normal">Cubes</div>
<div class="dh" style="left:43px;top:242px;width:15px"></div>
<svg class="a" style="left:67px;top:234.1px" width="13" height="13" viewBox="0 0 13 13"><path d="M1.5 4.5 L4 2.5 L7 2.5 L8 1.5 L11.5 1 L11.5 8.5 L3 11.5 L1.5 11.5 Z" fill="#a9d3f5" stroke="#2a3a5a" stroke-width="0.9"/><path d="M1.5 5.5 L9.5 3 L9.5 9.5 L1.5 11.5 Z" fill="#a9d3f5" stroke="#2a3a5a" stroke-width="0.9"/></svg>
<div class="t" style="left:90.70px;top:251.80px;font-size:11px;transform:scaleX(0.9571);transform-origin:0 0;color:#0a0a0a;-webkit-text-stroke-width:0.1px;font-weight:normal">Dimensions</div>
<div class="dh" style="left:43px;top:258px;width:15px"></div>
<svg class="a" style="left:67px;top:250.0px" width="13" height="13" viewBox="0 0 13 13"><path d="M1.5 4.5 L4 2.5 L7 2.5 L8 1.5 L11.5 1 L11.5 8.5 L3 11.5 L1.5 11.5 Z" fill="#a9d3f5" stroke="#2a3a5a" stroke-width="0.9"/><path d="M1.5 5.5 L9.5 3 L9.5 9.5 L1.5 11.5 Z" fill="#a9d3f5" stroke="#2a3a5a" stroke-width="0.9"/></svg>
<div class="t" style="left:90.70px;top:267.70px;font-size:11px;transform:scaleX(0.9751);transform-origin:0 0;color:#0a0a0a;-webkit-text-stroke-width:0.1px;font-weight:normal">Transformations</div>
<div class="dh" style="left:43px;top:274px;width:15px"></div>
<svg class="a" style="left:67px;top:265.9px" width="13" height="13" viewBox="0 0 13 13"><path d="M1.5 4.5 L4 2.5 L7 2.5 L8 1.5 L11.5 1 L11.5 8.5 L3 11.5 L1.5 11.5 Z" fill="#a9d3f5" stroke="#2a3a5a" stroke-width="0.9"/><path d="M1.5 5.5 L9.5 3 L9.5 9.5 L1.5 11.5 Z" fill="#a9d3f5" stroke="#2a3a5a" stroke-width="0.9"/></svg>
<div class="t" style="left:90.70px;top:283.60px;font-size:11px;transform:scaleX(1.0037);transform-origin:0 0;color:#0a0a0a;-webkit-text-stroke-width:0.1px;font-weight:normal">Mapplets</div>
<div class="dh" style="left:43px;top:290px;width:15px"></div>
<svg class="a" style="left:67px;top:281.8px" width="13" height="13" viewBox="0 0 13 13"><path d="M1.5 4.5 L4 2.5 L7 2.5 L8 1.5 L11.5 1 L11.5 8.5 L3 11.5 L1.5 11.5 Z" fill="#a9d3f5" stroke="#2a3a5a" stroke-width="0.9"/><path d="M1.5 5.5 L9.5 3 L9.5 9.5 L1.5 11.5 Z" fill="#a9d3f5" stroke="#2a3a5a" stroke-width="0.9"/></svg>
<div class="t" style="left:90.70px;top:299.50px;font-size:11px;transform:scaleX(1.0001);transform-origin:0 0;color:#0a0a0a;-webkit-text-stroke-width:0.1px;font-weight:normal">Mappings</div>
<div class="a" style="left:37px;top:301px;width:10px;height:10px;border:1px solid #939393;background:#fff"></div><div class="a" style="left:39px;top:305.5px;width:6px;height:1px;background:#222"></div><div class="a" style="left:41.5px;top:303px;width:1px;height:6px;background:#222"></div>
<div class="dh" style="left:48px;top:306px;width:10px"></div>
<svg class="a" style="left:67px;top:297.70000000000005px" width="13" height="13" viewBox="0 0 13 13"><path d="M1.5 4.5 L4 2.5 L7 2.5 L8 1.5 L11.5 1 L11.5 8.5 L3 11.5 L1.5 11.5 Z" fill="#a9d3f5" stroke="#2a3a5a" stroke-width="0.9"/><path d="M1.5 5.5 L9.5 3 L9.5 9.5 L1.5 11.5 Z" fill="#a9d3f5" stroke="#2a3a5a" stroke-width="0.9"/></svg>
<div class="t" style="left:90.70px;top:315.40px;font-size:11px;transform:scaleX(0.9459);transform-origin:0 0;color:#0a0a0a;-webkit-text-stroke-width:0.1px;font-weight:normal">User-Defined Functions</div>
<div class="dh" style="left:43px;top:322px;width:15px"></div>
<svg class="a" style="left:67px;top:313.6px" width="13" height="13" viewBox="0 0 13 13"><path d="M1.5 4.5 L4 2.5 L7 2.5 L8 1.5 L11.5 1 L11.5 8.5 L3 11.5 L1.5 11.5 Z" fill="#a9d3f5" stroke="#2a3a5a" stroke-width="0.9"/><path d="M1.5 5.5 L9.5 3 L9.5 9.5 L1.5 11.5 Z" fill="#a9d3f5" stroke="#2a3a5a" stroke-width="0.9"/></svg>
<div class="a" style="left:120.7px;top:201.4px;width:94px;height:15px;border:1px solid #7da2ce"></div>
<div class="a" style="left:249.00px;top:120.00px;width:193.00px;height:306.00px;background:#dcdcdc"></div>
<div class="a" style="left:250.00px;top:121.00px;width:190.00px;height:302.00px;background:#fff"></div>
<div class="a" style="left:440.00px;top:121.00px;width:2.00px;height:305.00px;background:#888"></div>
<div class="a" style="left:249.00px;top:423.50px;width:193.00px;height:2.50px;background:#888"></div>
<div class="a" style="left:251.00px;top:122.00px;width:189.00px;height:27.00px;background:linear-gradient(90deg,#0b860b 0%,#108810 30%,#40a540 55%,#68bb68 80%,#72c072 100%)"></div>
<div class="t" style="left:281.00px;top:123.00px;font-size:11px;transform:scaleX(0.8398);transform-origin:0 0;color:#000;line-height:1;white-space:nowrap">DimProduct (Microsoft SQL S...</div>
<div class="t" style="left:281.00px;top:134.00px;font-size:11px;transform:scaleX(0.8416);transform-origin:0 0;color:#000;line-height:1;white-space:nowrap">Source Definition</div>
<div class="a" style="left:415.30px;top:123.90px;width:10.00px;height:9.00px;background:#fff;border:1px solid #8a8a8a;border-top-color:#e8e8e8;border-left-color:#e8e8e8"></div><div class="t" style="left:417.80px;top:124.40px;font-size:8px;font-weight:bold;color:#333">?</div>
<div class="a" style="left:427.60px;top:123.90px;width:10.00px;height:9.00px;background:#fff;border:1px solid #8a8a8a;border-top-color:#e8e8e8;border-left-color:#e8e8e8"></div><div class="a" style="left:430.60px;top:128.90px;width:5.00px;height:2.00px;background:#000"></div>
<div class="a" style="left:251.00px;top:149.00px;width:189.00px;height:274.00px;background:#fff"></div>
<div class="a" style="left:251.00px;top:149.00px;width:11.60px;height:274.00px;background:#f0f0f0;border-right:1px solid #a9a9a9"></div>
<div class="a" style="left:427.80px;top:149.00px;width:12.00px;height:274.00px;background:#f0f0f0;border-right:1px solid #a9a9a9"></div>
<div class="a" style="left:263.00px;top:149.00px;width:15.00px;height:14.00px;background:#f0f0f0;border-right:1px solid #a9a9a9;border-bottom:1px solid #a9a9a9;border-left:1px solid #fff"></div>
<div class="t cell" style="left:269.00px;top:153.20px;">K.</div>
<div class="a" style="left:278.00px;top:149.00px;width:89.50px;height:14.00px;background:#f0f0f0;border-right:1px solid #a9a9a9;border-bottom:1px solid #a9a9a9;border-left:1px solid #fff"></div>
<div class="t cell" style="left:284.60px;top:153.20px;">Name</div>
<div class="a" style="left:367.50px;top:149.00px;width:60.30px;height:14.00px;background:#f0f0f0;border-right:1px solid #a9a9a9;border-bottom:1px solid #a9a9a9;border-left:1px solid #fff"></div>
<div class="t cell" style="left:372.80px;top:153.20px;">Datatype</div>
<div class="a" style="left:251.00px;top:165.00px;width:11.60px;height:1.00px;background:#a9a9a9"></div>
<div class="a" style="left:251.00px;top:177.00px;width:11.60px;height:1.00px;background:#a9a9a9"></div>
<div class="a" style="left:251.00px;top:190.00px;width:11.60px;height:1.00px;background:#a9a9a9"></div>
<div class="a" style="left:251.00px;top:202.00px;width:11.60px;height:1.00px;background:#a9a9a9"></div>
<div class="a" style="left:251.00px;top:214.00px;width:11.60px;height:1.00px;background:#a9a9a9"></div>
<div class="a" style="left:251.00px;top:227.00px;width:11.60px;height:1.00px;background:#a9a9a9"></div>
<div class="a" style="left:251.00px;top:239.00px;width:11.60px;height:1.00px;background:#a9a9a9"></div>
<div class="a" style="left:251.00px;top:251.00px;width:11.60px;height:1.00px;background:#a9a9a9"></div>
<div class="a" style="left:251.00px;top:264.00px;width:11.60px;height:1.00px;background:#a9a9a9"></div>
<div class="a" style="left:251.00px;top:276.00px;width:11.60px;height:1.00px;background:#a9a9a9"></div>
<div class="a" style="left:251.00px;top:288.00px;width:11.60px;height:1.00px;background:#a9a9a9"></div>
<div class="a" style="left:251.00px;top:301.00px;width:11.60px;height:1.00px;background:#a9a9a9"></div>
<div class="a" style="left:251.00px;top:313.00px;width:11.60px;height:1.00px;background:#a9a9a9"></div>
<div class="a" style="left:251.00px;top:325.00px;width:11.60px;height:1.00px;background:#a9a9a9"></div>
<div class="a" style="left:251.00px;top:338.00px;width:11.60px;height:1.00px;background:#a9a9a9"></div>
<div class="a" style="left:251.00px;top:350.00px;width:11.60px;height:1.00px;background:#a9a9a9"></div>
<div class="a" style="left:251.00px;top:362.00px;width:11.60px;height:1.00px;background:#a9a9a9"></div>
<div class="a" style="left:251.00px;top:375.00px;width:11.60px;height:1.00px;background:#a9a9a9"></div>
<div class="a" style="left:251.00px;top:387.00px;width:11.60px;height:1.00px;background:#a9a9a9"></div>
<div class="a" style="left:251.00px;top:399.00px;width:11.60px;height:1.00px;background:#a9a9a9"></div>
<div class="a" style="left:251.00px;top:409.00px;width:11.60px;height:1.00px;background:#a9a9a9"></div>
<div class="a" style="left:427.80px;top:165.00px;width:12.00px;height:1.00px;background:#a9a9a9"></div>
<div class="a" style="left:427.80px;top:177.00px;width:12.00px;height:1.00px;background:#a9a9a9"></div>
<div class="a" style="left:427.80px;top:190.00px;width:12.00px;height:1.00px;background:#a9a9a9"></div>
<div class="a" style="left:427.80px;top:202.00px;width:12.00px;height:1.00px;background:#a9a9a9"></div>
<div class="a" style="left:427.80px;top:214.00px;width:12.00px;height:1.00px;background:#a9a9a9"></div>
<div class="a" style="left:427.80px;top:227.00px;width:12.00px;height:1.00px;background:#a9a9a9"></div>
<div class="a" style="left:427.80px;top:239.00px;width:12.00px;height:1.00px;background:#a9a9a9"></div>
<div class="a" style="left:427.80px;top:251.00px;width:12.00px;height:1.00px;background:#a9a9a9"></div>
<div class="a" style="left:427.80px;top:264.00px;width:12.00px;height:1.00px;background:#a9a9a9"></div>
<div class="a" style="left:427.80px;top:276.00px;width:12.00px;height:1.00px;background:#a9a9a9"></div>
<div class="a" style="left:427.80px;top:288.00px;width:12.00px;height:1.00px;background:#a9a9a9"></div>
<div class="a" style="left:427.80px;top:301.00px;width:12.00px;height:1.00px;background:#a9a9a9"></div>
<div class="a" style="left:427.80px;top:313.00px;width:12.00px;height:1.00px;background:#a9a9a9"></div>
<div class="a" style="left:427.80px;top:325.00px;width:12.00px;height:1.00px;background:#a9a9a9"></div>
<div class="a" style="left:427.80px;top:338.00px;width:12.00px;height:1.00px;background:#a9a9a9"></div>
<div class="a" style="left:427.80px;top:350.00px;width:12.00px;height:1.00px;background:#a9a9a9"></div>
<div class="a" style="left:427.80px;top:362.00px;width:12.00px;height:1.00px;background:#a9a9a9"></div>
<div class="a" style="left:427.80px;top:375.00px;width:12.00px;height:1.00px;background:#a9a9a9"></div>
<div class="a" style="left:427.80px;top:387.00px;width:12.00px;height:1.00px;background:#a9a9a9"></div>
<div class="a" style="left:427.80px;top:399.00px;width:12.00px;height:1.00px;background:#a9a9a9"></div>
<div class="a" style="left:427.80px;top:409.00px;width:12.00px;height:1.00px;background:#a9a9a9"></div>
<div class="a" style="left:263.00px;top:177.00px;width:164.80px;height:1.00px;background:#efefef"></div>
<div class="a" style="left:263.00px;top:190.00px;width:164.80px;height:1.00px;background:#efefef"></div>
<div class="a" style="left:263.00px;top:202.00px;width:164.80px;height:1.00px;background:#efefef"></div>
<div class="a" style="left:263.00px;top:214.00px;width:164.80px;height:1.00px;background:#efefef"></div>
<div class="a" style="left:263.00px;top:227.00px;width:164.80px;height:1.00px;background:#efefef"></div>
<div class="a" style="left:263.00px;top:239.00px;width:164.80px;height:1.00px;background:#efefef"></div>
<div class="a" style="left:263.00px;top:251.00px;width:164.80px;height:1.00px;background:#efefef"></div>
<div class="a" style="left:263.00px;top:264.00px;width:164.80px;height:1.00px;background:#efefef"></div>
<div class="a" style="left:263.00px;top:276.00px;width:164.80px;height:1.00px;background:#efefef"></div>
<div class="a" style="left:263.00px;top:288.00px;width:164.80px;height:1.00px;background:#efefef"></div>
<div class="a" style="left:263.00px;top:301.00px;width:164.80px;height:1.00px;background:#efefef"></div>
<div class="a" style="left:263.00px;top:313.00px;width:164.80px;height:1.00px;background:#efefef"></div>
<div class="a" style="left:263.00px;top:325.00px;width:164.80px;height:1.00px;background:#efefef"></div>
<div class="a" style="left:263.00px;top:338.00px;width:164.80px;height:1.00px;background:#efefef"></div>
<div class="a" style="left:263.00px;top:350.00px;width:164.80px;height:1.00px;background:#efefef"></div>
<div class="a" style="left:263.00px;top:362.00px;width:164.80px;height:1.00px;background:#efefef"></div>
<div class="a" style="left:263.00px;top:375.00px;width:164.80px;height:1.00px;background:#efefef"></div>
<div class="a" style="left:263.00px;top:387.00px;width:164.80px;height:1.00px;background:#efefef"></div>
<div class="a" style="left:263.00px;top:399.00px;width:164.80px;height:1.00px;background:#efefef"></div>
<div class="a" style="left:263.00px;top:409.00px;width:164.80px;height:1.00px;background:#efefef"></div>
<div class="a" style="left:277.00px;top:165.50px;width:1.00px;height:257.50px;background:#f0f0f0"></div>
<div class="a" style="left:366.50px;top:165.50px;width:1.00px;height:257.50px;background:#f0f0f0"></div>
<div class="a" style="left:426.80px;top:165.50px;width:1.00px;height:257.50px;background:#f0f0f0"></div>
<div class="a" style="left:432.30px;top:168.80px;width:0;height:0;border-top:3.0px solid transparent;border-bottom:3.0px solid transparent;border-left:3px solid #000"></div>
<div class="t cell" style="left:284.60px;top:168.10px;">ProductKey</div>
<div class="t cell" style="left:372.80px;top:168.10px;">int</div>
<div class="a" style="left:278.00px;top:168.00px;width:1.00px;height:8.00px;background:#f5dcae"></div>
<div class="a" style="left:432.30px;top:181.14px;width:0;height:0;border-top:3.0px solid transparent;border-bottom:3.0px solid transparent;border-left:3px solid #000"></div>
<div class="t cell" style="left:284.60px;top:180.44px;">EnglishProductN...</div>
<div class="t cell" style="left:372.80px;top:180.44px;">nvarchar</div>
<div class="a" style="left:278.00px;top:180.34px;width:1.00px;height:8.00px;background:#f5dcae"></div>
<div class="a" style="left:432.30px;top:193.48px;width:0;height:0;border-top:3.0px solid transparent;border-bottom:3.0px solid transparent;border-left:3px solid #000"></div>
<div class="t cell" style="left:284.60px;top:192.78px;">StandardCost</div>
<div class="t cell" style="left:372.80px;top:192.78px;">money</div>
<div class="a" style="left:278.00px;top:192.68px;width:1.00px;height:8.00px;background:#f5dcae"></div>
<div class="a" style="left:432.30px;top:205.82px;width:0;height:0;border-top:3.0px solid transparent;border-bottom:3.0px solid transparent;border-left:3px solid #000"></div>
<div class="t cell" style="left:284.60px;top:205.12px;">Color</div>
<div class="t cell" style="left:372.80px;top:205.12px;">nvarchar</div>
<div class="a" style="left:278.00px;top:205.02px;width:1.00px;height:8.00px;background:#f5dcae"></div>
<div class="a" style="left:432.30px;top:218.16px;width:0;height:0;border-top:3.0px solid transparent;border-bottom:3.0px solid transparent;border-left:3px solid #000"></div>
<div class="t cell" style="left:284.60px;top:217.46px;">ReorderPoint</div>
<div class="t cell" style="left:372.80px;top:217.46px;">smallint</div>
<div class="a" style="left:278.00px;top:217.36px;width:1.00px;height:8.00px;background:#f5dcae"></div>
<div class="a" style="left:432.30px;top:230.50px;width:0;height:0;border-top:3.0px solid transparent;border-bottom:3.0px solid transparent;border-left:3px solid #000"></div>
<div class="t cell" style="left:284.60px;top:229.80px;">ListPrice</div>
<div class="t cell" style="left:372.80px;top:229.80px;">money</div>
<div class="a" style="left:278.00px;top:229.70px;width:1.00px;height:8.00px;background:#f5dcae"></div>
<div class="a" style="left:432.30px;top:242.84px;width:0;height:0;border-top:3.0px solid transparent;border-bottom:3.0px solid transparent;border-left:3px solid #000"></div>
<div class="t cell" style="left:284.60px;top:242.14px;">Size</div>
<div class="t cell" style="left:372.80px;top:242.14px;">nvarchar</div>
<div class="a" style="left:278.00px;top:242.04px;width:1.00px;height:8.00px;background:#f5dcae"></div>
<div class="a" style="left:432.30px;top:255.18px;width:0;height:0;border-top:3.0px solid transparent;border-bottom:3.0px solid transparent;border-left:3px solid #000"></div>
<div class="t cell" style="left:284.60px;top:254.48px;">SizeRange</div>
<div class="t cell" style="left:372.80px;top:254.48px;">nvarchar</div>
<div class="a" style="left:278.00px;top:254.38px;width:1.00px;height:8.00px;background:#f5dcae"></div>
<div class="a" style="left:432.30px;top:267.52px;width:0;height:0;border-top:3.0px solid transparent;border-bottom:3.0px solid transparent;border-left:3px solid #000"></div>
<div class="t cell" style="left:284.60px;top:266.82px;">Weight</div>
<div class="t cell" style="left:372.80px;top:266.82px;">float</div>
<div class="a" style="left:278.00px;top:266.72px;width:1.00px;height:8.00px;background:#f5dcae"></div>
<div class="a" style="left:432.30px;top:279.86px;width:0;height:0;border-top:3.0px solid transparent;border-bottom:3.0px solid transparent;border-left:3px solid #000"></div>
<div class="t cell" style="left:284.60px;top:279.16px;">DaysToManufac...</div>
<div class="t cell" style="left:372.80px;top:279.16px;">int</div>
<div class="a" style="left:278.00px;top:279.06px;width:1.00px;height:8.00px;background:#f5dcae"></div>
<div class="a" style="left:432.30px;top:292.20px;width:0;height:0;border-top:3.0px solid transparent;border-bottom:3.0px solid transparent;border-left:3px solid #000"></div>
<div class="t cell" style="left:284.60px;top:291.50px;">ProductLine</div>
<div class="t cell" style="left:372.80px;top:291.50px;">nchar</div>
<div class="a" style="left:278.00px;top:291.40px;width:1.00px;height:8.00px;background:#f5dcae"></div>
<div class="a" style="left:432.30px;top:304.54px;width:0;height:0;border-top:3.0px solid transparent;border-bottom:3.0px solid transparent;border-left:3px solid #000"></div>
<div class="t cell" style="left:284.60px;top:303.84px;">DealerPrice</div>
<div class="t cell" style="left:372.80px;top:303.84px;">money</div>
<div class="a" style="left:278.00px;top:303.74px;width:1.00px;height:8.00px;background:#f5dcae"></div>
<div class="a" style="left:432.30px;top:316.88px;width:0;height:0;border-top:3.0px solid transparent;border-bottom:3.0px solid transparent;border-left:3px solid #000"></div>
<div class="t cell" style="left:284.60px;top:316.18px;">Class</div>
<div class="t cell" style="left:372.80px;top:316.18px;">nchar</div>
<div class="a" style="left:278.00px;top:316.08px;width:1.00px;height:8.00px;background:#f5dcae"></div>
<div class="a" style="left:432.30px;top:329.22px;width:0;height:0;border-top:3.0px solid transparent;border-bottom:3.0px solid transparent;border-left:3px solid #000"></div>
<div class="t cell" style="left:284.60px;top:328.52px;">Style</div>
<div class="t cell" style="left:372.80px;top:328.52px;">nchar</div>
<div class="a" style="left:278.00px;top:328.42px;width:1.00px;height:8.00px;background:#f5dcae"></div>
<div class="a" style="left:432.30px;top:341.56px;width:0;height:0;border-top:3.0px solid transparent;border-bottom:3.0px solid transparent;border-left:3px solid #000"></div>
<div class="t cell" style="left:284.60px;top:340.86px;">ModelName</div>
<div class="t cell" style="left:372.80px;top:340.86px;">nvarchar</div>
<div class="a" style="left:278.00px;top:340.76px;width:1.00px;height:8.00px;background:#f5dcae"></div>
<div class="a" style="left:432.30px;top:353.90px;width:0;height:0;border-top:3.0px solid transparent;border-bottom:3.0px solid transparent;border-left:3px solid #000"></div>
<div class="t cell" style="left:284.60px;top:353.20px;">EnglishDescription</div>
<div class="t cell" style="left:372.80px;top:353.20px;">nvarchar</div>
<div class="a" style="left:278.00px;top:353.10px;width:1.00px;height:8.00px;background:#f5dcae"></div>
<div class="a" style="left:432.30px;top:366.24px;width:0;height:0;border-top:3.0px solid transparent;border-bottom:3.0px solid transparent;border-left:3px solid #000"></div>
<div class="t cell" style="left:284.60px;top:365.54px;">StartDate</div>
<div class="t cell" style="left:372.80px;top:365.54px;">datetime</div>
<div class="a" style="left:278.00px;top:365.44px;width:1.00px;height:8.00px;background:#f5dcae"></div>
<div class="a" style="left:432.30px;top:378.58px;width:0;height:0;border-top:3.0px solid transparent;border-bottom:3.0px solid transparent;border-left:3px solid #000"></div>
<div class="t cell" style="left:284.60px;top:377.88px;">EndDate</div>
<div class="t cell" style="left:372.80px;top:377.88px;">datetime</div>
<div class="a" style="left:278.00px;top:377.78px;width:1.00px;height:8.00px;background:#f5dcae"></div>
<div class="a" style="left:432.30px;top:390.92px;width:0;height:0;border-top:3.0px solid transparent;border-bottom:3.0px solid transparent;border-left:3px solid #000"></div>
<div class="t cell" style="left:284.60px;top:390.22px;">Status</div>
<div class="t cell" style="left:372.80px;top:390.22px;">nvarchar</div>
<div class="a" style="left:278.00px;top:390.12px;width:1.00px;height:8.00px;background:#f5dcae"></div>
<div class="a" style="left:262.60px;top:407.00px;width:165.20px;height:1.00px;background:#a0a0a0"></div>
<div class="a" style="left:262.80px;top:407.60px;width:164.60px;height:14.40px;background:#e8e8e8"></div>
<div class="a" style="left:262.80px;top:407.60px;width:15.70px;height:14.40px;background:#f0f0f0;border:1px solid #a0a0a0;border-left-color:#fff;border-top-color:#fff"></div>
<div class="a" style="left:267.50px;top:411.50px;width:0;height:0;border-top:3.5px solid transparent;border-bottom:3.5px solid transparent;border-right:4px solid #000"></div>
<div class="a" style="left:278.50px;top:407.60px;width:100.50px;height:14.40px;background:#f0f0f0;border:1px solid #a0a0a0;border-left-color:#fff;border-top-color:#fff"></div>
<div class="a" style="left:413.30px;top:407.60px;width:14.10px;height:14.40px;background:#f0f0f0;border:1px solid #a0a0a0;border-left-color:#fff;border-top-color:#fff"></div>
<div class="a" style="left:418.50px;top:411.50px;width:0;height:0;border-top:3.5px solid transparent;border-bottom:3.5px solid transparent;border-left:4px solid #000"></div>
<svg class="a" style="left:252px;top:123px" width="26" height="26" viewBox="0 0 26 26"><path d="M1 5.5 L15 1 L15 19 L1 24 Z" fill="#b8b8ff" stroke="#9090f0" stroke-width="0.8"/><path d="M4.5 4.5 V22.5 M8 3.3 V21.2 M11.5 2.2 V20" stroke="#7878e8" stroke-width="1.3"/><path d="M2.5 10 L14 6.5 M2.5 14 L14 10.5 M2.5 18 L14 14.5" stroke="#e8f8ff" stroke-width="1"/><path d="M11 12 L17.5 8.8 L16.5 4.5 L24.5 8 L19.5 15.5 L18.5 12 L11.5 16 Z" fill="#f4c400" stroke="#d89000" stroke-width="0.7"/></svg>
<svg class="a" style="left:467px;top:119px" width="206" height="307"><defs><pattern id="hatch" patternUnits="userSpaceOnUse" width="3" height="3"><rect width="3" height="3" fill="#fff"/><rect x="2" y="0" width="1" height="1" fill="#3a3a3a"/><rect x="1" y="1" width="1" height="1" fill="#3a3a3a"/><rect x="0" y="2" width="1" height="1" fill="#3a3a3a"/></pattern></defs><rect x="1" y="1" width="205" height="306" fill="url(#hatch)"/></svg>
<div class="a" style="left:470.20px;top:122.90px;width:199.30px;height:299.80px;background:#fff"></div>
<div class="a" style="left:470.20px;top:122.90px;width:199.30px;height:26.10px;background:linear-gradient(90deg,#808008 0%,#84840e 40%,#9c9c40 62%,#b4b46e 85%,#bcbc7c 100%)"></div>
<div class="t" style="left:499.60px;top:123.00px;font-size:11px;transform:scaleX(0.8368);transform-origin:0 0;color:#000;line-height:1;white-space:nowrap">SQ_DimProduct</div>
<div class="t" style="left:499.60px;top:133.50px;font-size:11px;transform:scaleX(0.8431);transform-origin:0 0;color:#000;line-height:1;white-space:nowrap">Source Qualifier</div>
<div class="a" style="left:645.80px;top:124.30px;width:10.00px;height:9.00px;background:#fff;border:1px solid #8a8a8a;border-top-color:#e8e8e8;border-left-color:#e8e8e8"></div><div class="t" style="left:648.30px;top:124.80px;font-size:8px;font-weight:bold;color:#333">?</div>
<div class="a" style="left:658.00px;top:124.30px;width:10.00px;height:9.00px;background:#fff;border:1px solid #8a8a8a;border-top-color:#e8e8e8;border-left-color:#e8e8e8"></div><div class="a" style="left:661.00px;top:129.30px;width:5.00px;height:2.00px;background:#000"></div>
<div class="a" style="left:470.20px;top:149.00px;width:199.30px;height:273.70px;background:#fff"></div>
<div class="a" style="left:470.20px;top:149.00px;width:11.30px;height:273.70px;background:#f0f0f0;border-right:1px solid #a9a9a9"></div>
<div class="a" style="left:657.70px;top:149.00px;width:11.80px;height:273.70px;background:#f0f0f0;border-right:1px solid #a9a9a9"></div>
<div class="a" style="left:481.50px;top:149.00px;width:88.80px;height:13.70px;background:#f0f0f0;border-right:1px solid #a9a9a9;border-bottom:1px solid #a9a9a9;border-left:1px solid #fff"></div>
<div class="t cell" style="left:488.00px;top:153.20px;">Name</div>
<div class="a" style="left:570.30px;top:149.00px;width:71.00px;height:13.70px;background:#f0f0f0;border-right:1px solid #a9a9a9;border-bottom:1px solid #a9a9a9;border-left:1px solid #fff"></div>
<div class="t cell" style="left:576.40px;top:153.20px;">Datatype</div>
<div class="a" style="left:641.30px;top:149.00px;width:16.40px;height:13.70px;background:#f0f0f0;border-right:1px solid #a9a9a9;border-bottom:1px solid #a9a9a9;border-left:1px solid #fff"></div>
<div class="t cell" style="left:646.70px;top:153.20px;">L..</div>
<div class="a" style="left:470.20px;top:165.00px;width:11.30px;height:1.00px;background:#a9a9a9"></div>
<div class="a" style="left:470.20px;top:177.00px;width:11.30px;height:1.00px;background:#a9a9a9"></div>
<div class="a" style="left:470.20px;top:190.00px;width:11.30px;height:1.00px;background:#a9a9a9"></div>
<div class="a" style="left:470.20px;top:202.00px;width:11.30px;height:1.00px;background:#a9a9a9"></div>
<div class="a" style="left:470.20px;top:214.00px;width:11.30px;height:1.00px;background:#a9a9a9"></div>
<div class="a" style="left:470.20px;top:227.00px;width:11.30px;height:1.00px;background:#a9a9a9"></div>
<div class="a" style="left:470.20px;top:239.00px;width:11.30px;height:1.00px;background:#a9a9a9"></div>
<div class="a" style="left:470.20px;top:251.00px;width:11.30px;height:1.00px;background:#a9a9a9"></div>
<div class="a" style="left:470.20px;top:264.00px;width:11.30px;height:1.00px;background:#a9a9a9"></div>
<div class="a" style="left:470.20px;top:276.00px;width:11.30px;height:1.00px;background:#a9a9a9"></div>
<div class="a" style="left:470.20px;top:288.00px;width:11.30px;height:1.00px;background:#a9a9a9"></div>
<div class="a" style="left:470.20px;top:301.00px;width:11.30px;height:1.00px;background:#a9a9a9"></div>
<div class="a" style="left:470.20px;top:313.00px;width:11.30px;height:1.00px;background:#a9a9a9"></div>
<div class="a" style="left:470.20px;top:325.00px;width:11.30px;height:1.00px;background:#a9a9a9"></div>
<div class="a" style="left:470.20px;top:338.00px;width:11.30px;height:1.00px;background:#a9a9a9"></div>
<div class="a" style="left:470.20px;top:350.00px;width:11.30px;height:1.00px;background:#a9a9a9"></div>
<div class="a" style="left:470.20px;top:362.00px;width:11.30px;height:1.00px;background:#a9a9a9"></div>
<div class="a" style="left:470.20px;top:375.00px;width:11.30px;height:1.00px;background:#a9a9a9"></div>
<div class="a" style="left:470.20px;top:387.00px;width:11.30px;height:1.00px;background:#a9a9a9"></div>
<div class="a" style="left:470.20px;top:399.00px;width:11.30px;height:1.00px;background:#a9a9a9"></div>
<div class="a" style="left:657.70px;top:165.00px;width:11.80px;height:1.00px;background:#a9a9a9"></div>
<div class="a" style="left:657.70px;top:177.00px;width:11.80px;height:1.00px;background:#a9a9a9"></div>
<div class="a" style="left:657.70px;top:190.00px;width:11.80px;height:1.00px;background:#a9a9a9"></div>
<div class="a" style="left:657.70px;top:202.00px;width:11.80px;height:1.00px;background:#a9a9a9"></div>
<div class="a" style="left:657.70px;top:214.00px;width:11.80px;height:1.00px;background:#a9a9a9"></div>
<div class="a" style="left:657.70px;top:227.00px;width:11.80px;height:1.00px;background:#a9a9a9"></div>
<div class="a" style="left:657.70px;top:239.00px;width:11.80px;height:1.00px;background:#a9a9a9"></div>
<div class="a" style="left:657.70px;top:251.00px;width:11.80px;height:1.00px;background:#a9a9a9"></div>
<div class="a" style="left:657.70px;top:264.00px;width:11.80px;height:1.00px;background:#a9a9a9"></div>
<div class="a" style="left:657.70px;top:276.00px;width:11.80px;height:1.00px;background:#a9a9a9"></div>
<div class="a" style="left:657.70px;top:288.00px;width:11.80px;height:1.00px;background:#a9a9a9"></div>
<div class="a" style="left:657.70px;top:301.00px;width:11.80px;height:1.00px;background:#a9a9a9"></div>
<div class="a" style="left:657.70px;top:313.00px;width:11.80px;height:1.00px;background:#a9a9a9"></div>
<div class="a" style="left:657.70px;top:325.00px;width:11.80px;height:1.00px;background:#a9a9a9"></div>
<div class="a" style="left:657.70px;top:338.00px;width:11.80px;height:1.00px;background:#a9a9a9"></div>
<div class="a" style="left:657.70px;top:350.00px;width:11.80px;height:1.00px;background:#a9a9a9"></div>
<div class="a" style="left:657.70px;top:362.00px;width:11.80px;height:1.00px;background:#a9a9a9"></div>
<div class="a" style="left:657.70px;top:375.00px;width:11.80px;height:1.00px;background:#a9a9a9"></div>
<div class="a" style="left:657.70px;top:387.00px;width:11.80px;height:1.00px;background:#a9a9a9"></div>
<div class="a" style="left:657.70px;top:399.00px;width:11.80px;height:1.00px;background:#a9a9a9"></div>
<div class="a" style="left:481.50px;top:177.00px;width:176.20px;height:1.00px;background:#efefef"></div>
<div class="a" style="left:481.50px;top:190.00px;width:176.20px;height:1.00px;background:#efefef"></div>
<div class="a" style="left:481.50px;top:202.00px;width:176.20px;height:1.00px;background:#efefef"></div>
<div class="a" style="left:481.50px;top:214.00px;width:176.20px;height:1.00px;background:#efefef"></div>
<div class="a" style="left:481.50px;top:227.00px;width:176.20px;height:1.00px;background:#efefef"></div>
<div class="a" style="left:481.50px;top:239.00px;width:176.20px;height:1.00px;background:#efefef"></div>
<div class="a" style="left:481.50px;top:251.00px;width:176.20px;height:1.00px;background:#efefef"></div>
<div class="a" style="left:481.50px;top:264.00px;width:176.20px;height:1.00px;background:#efefef"></div>
<div class="a" style="left:481.50px;top:276.00px;width:176.20px;height:1.00px;background:#efefef"></div>
<div class="a" style="left:481.50px;top:288.00px;width:176.20px;height:1.00px;background:#efefef"></div>
<div class="a" style="left:481.50px;top:301.00px;width:176.20px;height:1.00px;background:#efefef"></div>
<div class="a" style="left:481.50px;top:313.00px;width:176.20px;height:1.00px;background:#efefef"></div>
<div class="a" style="left:481.50px;top:325.00px;width:176.20px;height:1.00px;background:#efefef"></div>
<div class="a" style="left:481.50px;top:338.00px;width:176.20px;height:1.00px;background:#efefef"></div>
<div class="a" style="left:481.50px;top:350.00px;width:176.20px;height:1.00px;background:#efefef"></div>
<div class="a" style="left:481.50px;top:362.00px;width:176.20px;height:1.00px;background:#efefef"></div>
<div class="a" style="left:481.50px;top:375.00px;width:176.20px;height:1.00px;background:#efefef"></div>
<div class="a" style="left:481.50px;top:387.00px;width:176.20px;height:1.00px;background:#efefef"></div>
<div class="a" style="left:481.50px;top:399.00px;width:176.20px;height:1.00px;background:#efefef"></div>
<div class="a" style="left:569.30px;top:165.50px;width:1.00px;height:257.20px;background:#f0f0f0"></div>
<div class="a" style="left:640.30px;top:165.50px;width:1.00px;height:257.20px;background:#f0f0f0"></div>
<div class="a" style="left:656.70px;top:165.50px;width:1.00px;height:257.20px;background:#f0f0f0"></div>
<div class="a" style="left:474.70px;top:168.80px;width:0;height:0;border-top:3.0px solid transparent;border-bottom:3.0px solid transparent;border-left:3px solid #000"></div>
<div class="a" style="left:662.20px;top:168.80px;width:0;height:0;border-top:3.0px solid transparent;border-bottom:3.0px solid transparent;border-left:3px solid #000"></div>
<div class="a" style="left:483.80px;top:165.90px;width:173.90px;height:11.54px;background:#3399ff"></div>
<div class="a" style="left:483.80px;top:165.90px;width:12.00px;height:11.54px;background:repeating-conic-gradient(#3399ff 0 25%,#cce4ff 0 50%) 0 0/2px 2px"></div>
<div class="a" style="left:570.00px;top:165.90px;width:1.00px;height:11.54px;background:#fff"></div>
<div class="a" style="left:641.00px;top:165.90px;width:1.00px;height:11.54px;background:#fff"></div>
<div class="t cell" style="left:497.00px;top:168.10px;color:#fff">ProductKey</div>
<div class="t cell" style="left:575.60px;top:168.10px;color:#fff">integer</div>
<div class="t cell" style="left:646.70px;top:168.10px;color:#fff">10</div>
<div class="a" style="left:474.70px;top:181.14px;width:0;height:0;border-top:3.0px solid transparent;border-bottom:3.0px solid transparent;border-left:3px solid #000"></div>
<div class="a" style="left:662.20px;top:181.14px;width:0;height:0;border-top:3.0px solid transparent;border-bottom:3.0px solid transparent;border-left:3px solid #000"></div>
<div class="t cell" style="left:497.00px;top:180.44px;">EnglishProduct...</div>
<div class="t cell" style="left:575.60px;top:180.44px;">nstring</div>
<div class="t cell" style="left:646.70px;top:180.44px;">50</div>
<div class="a" style="left:474.70px;top:193.48px;width:0;height:0;border-top:3.0px solid transparent;border-bottom:3.0px solid transparent;border-left:3px solid #000"></div>
<div class="a" style="left:662.20px;top:193.48px;width:0;height:0;border-top:3.0px solid transparent;border-bottom:3.0px solid transparent;border-left:3px solid #000"></div>
<div class="t cell" style="left:497.00px;top:192.78px;">StandardCost</div>
<div class="t cell" style="left:575.60px;top:192.78px;">decimal</div>
<div class="t cell" style="left:646.70px;top:192.78px;">19</div>
<div class="a" style="left:474.70px;top:205.82px;width:0;height:0;border-top:3.0px solid transparent;border-bottom:3.0px solid transparent;border-left:3px solid #000"></div>
<div class="a" style="left:662.20px;top:205.82px;width:0;height:0;border-top:3.0px solid transparent;border-bottom:3.0px solid transparent;border-left:3px solid #000"></div>
<div class="t cell" style="left:497.00px;top:205.12px;">Color</div>
<div class="t cell" style="left:575.60px;top:205.12px;">nstring</div>
<div class="t cell" style="left:646.70px;top:205.12px;">15</div>
<div class="a" style="left:474.70px;top:218.16px;width:0;height:0;border-top:3.0px solid transparent;border-bottom:3.0px solid transparent;border-left:3px solid #000"></div>
<div class="a" style="left:662.20px;top:218.16px;width:0;height:0;border-top:3.0px solid transparent;border-bottom:3.0px solid transparent;border-left:3px solid #000"></div>
<div class="t cell" style="left:497.00px;top:217.46px;">ReorderPoint</div>
<div class="t cell" style="left:575.60px;top:217.46px;">small integer</div>
<div class="t cell" style="left:646.70px;top:217.46px;">5</div>
<div class="a" style="left:474.70px;top:230.50px;width:0;height:0;border-top:3.0px solid transparent;border-bottom:3.0px solid transparent;border-left:3px solid #000"></div>
<div class="a" style="left:662.20px;top:230.50px;width:0;height:0;border-top:3.0px solid transparent;border-bottom:3.0px solid transparent;border-left:3px solid #000"></div>
<div class="t cell" style="left:497.00px;top:229.80px;">ListPrice</div>
<div class="t cell" style="left:575.60px;top:229.80px;">decimal</div>
<div class="t cell" style="left:646.70px;top:229.80px;">19</div>
<div class="a" style="left:474.70px;top:242.84px;width:0;height:0;border-top:3.0px solid transparent;border-bottom:3.0px solid transparent;border-left:3px solid #000"></div>
<div class="a" style="left:662.20px;top:242.84px;width:0;height:0;border-top:3.0px solid transparent;border-bottom:3.0px solid transparent;border-left:3px solid #000"></div>
<div class="t cell" style="left:497.00px;top:242.14px;">Size</div>
<div class="t cell" style="left:575.60px;top:242.14px;">nstring</div>
<div class="t cell" style="left:646.70px;top:242.14px;">50</div>
<div class="a" style="left:474.70px;top:255.18px;width:0;height:0;border-top:3.0px solid transparent;border-bottom:3.0px solid transparent;border-left:3px solid #000"></div>
<div class="a" style="left:662.20px;top:255.18px;width:0;height:0;border-top:3.0px solid transparent;border-bottom:3.0px solid transparent;border-left:3px solid #000"></div>
<div class="t cell" style="left:497.00px;top:254.48px;">SizeRange</div>
<div class="t cell" style="left:575.60px;top:254.48px;">nstring</div>
<div class="t cell" style="left:646.70px;top:254.48px;">50</div>
<div class="a" style="left:474.70px;top:267.52px;width:0;height:0;border-top:3.0px solid transparent;border-bottom:3.0px solid transparent;border-left:3px solid #000"></div>
<div class="a" style="left:662.20px;top:267.52px;width:0;height:0;border-top:3.0px solid transparent;border-bottom:3.0px solid transparent;border-left:3px solid #000"></div>
<div class="t cell" style="left:497.00px;top:266.82px;">Weight</div>
<div class="t cell" style="left:575.60px;top:266.82px;">double</div>
<div class="t cell" style="left:646.70px;top:266.82px;">15</div>
<div class="a" style="left:474.70px;top:279.86px;width:0;height:0;border-top:3.0px solid transparent;border-bottom:3.0px solid transparent;border-left:3px solid #000"></div>
<div class="a" style="left:662.20px;top:279.86px;width:0;height:0;border-top:3.0px solid transparent;border-bottom:3.0px solid transparent;border-left:3px solid #000"></div>
<div class="t cell" style="left:497.00px;top:279.16px;">DaysToManuf...</div>
<div class="t cell" style="left:575.60px;top:279.16px;">integer</div>
<div class="t cell" style="left:646.70px;top:279.16px;">10</div>
<div class="a" style="left:474.70px;top:292.20px;width:0;height:0;border-top:3.0px solid transparent;border-bottom:3.0px solid transparent;border-left:3px solid #000"></div>
<div class="a" style="left:662.20px;top:292.20px;width:0;height:0;border-top:3.0px solid transparent;border-bottom:3.0px solid transparent;border-left:3px solid #000"></div>
<div class="t cell" style="left:497.00px;top:291.50px;">ProductLine</div>
<div class="t cell" style="left:575.60px;top:291.50px;">nstring</div>
<div class="t cell" style="left:646.70px;top:291.50px;">2</div>
<div class="a" style="left:474.70px;top:304.54px;width:0;height:0;border-top:3.0px solid transparent;border-bottom:3.0px solid transparent;border-left:3px solid #000"></div>
<div class="a" style="left:662.20px;top:304.54px;width:0;height:0;border-top:3.0px solid transparent;border-bottom:3.0px solid transparent;border-left:3px solid #000"></div>
<div class="t cell" style="left:497.00px;top:303.84px;">DealerPrice</div>
<div class="t cell" style="left:575.60px;top:303.84px;">decimal</div>
<div class="t cell" style="left:646.70px;top:303.84px;">19</div>
<div class="a" style="left:474.70px;top:316.88px;width:0;height:0;border-top:3.0px solid transparent;border-bottom:3.0px solid transparent;border-left:3px solid #000"></div>
<div class="a" style="left:662.20px;top:316.88px;width:0;height:0;border-top:3.0px solid transparent;border-bottom:3.0px solid transparent;border-left:3px solid #000"></div>
<div class="t cell" style="left:497.00px;top:316.18px;">Class</div>
<div class="t cell" style="left:575.60px;top:316.18px;">nstring</div>
<div class="t cell" style="left:646.70px;top:316.18px;">2</div>
<div class="a" style="left:474.70px;top:329.22px;width:0;height:0;border-top:3.0px solid transparent;border-bottom:3.0px solid transparent;border-left:3px solid #000"></div>
<div class="a" style="left:662.20px;top:329.22px;width:0;height:0;border-top:3.0px solid transparent;border-bottom:3.0px solid transparent;border-left:3px solid #000"></div>
<div class="t cell" style="left:497.00px;top:328.52px;">Style</div>
<div class="t cell" style="left:575.60px;top:328.52px;">nstring</div>
<div class="t cell" style="left:646.70px;top:328.52px;">2</div>
<div class="a" style="left:474.70px;top:341.56px;width:0;height:0;border-top:3.0px solid transparent;border-bottom:3.0px solid transparent;border-left:3px solid #000"></div>
<div class="a" style="left:662.20px;top:341.56px;width:0;height:0;border-top:3.0px solid transparent;border-bottom:3.0px solid transparent;border-left:3px solid #000"></div>
<div class="t cell" style="left:497.00px;top:340.86px;">ModelName</div>
<div class="t cell" style="left:575.60px;top:340.86px;">nstring</div>
<div class="t cell" style="left:646.70px;top:340.86px;">50</div>
<div class="a" style="left:474.70px;top:353.90px;width:0;height:0;border-top:3.0px solid transparent;border-bottom:3.0px solid transparent;border-left:3px solid #000"></div>
<div class="a" style="left:662.20px;top:353.90px;width:0;height:0;border-top:3.0px solid transparent;border-bottom:3.0px solid transparent;border-left:3px solid #000"></div>
<div class="t cell" style="left:497.00px;top:353.20px;">EnglishDescrip...</div>
<div class="t cell" style="left:575.60px;top:353.20px;">nstring</div>
<div class="t cell" style="left:646.70px;top:353.20px;">40</div>
<div class="a" style="left:474.70px;top:366.24px;width:0;height:0;border-top:3.0px solid transparent;border-bottom:3.0px solid transparent;border-left:3px solid #000"></div>
<div class="a" style="left:662.20px;top:366.24px;width:0;height:0;border-top:3.0px solid transparent;border-bottom:3.0px solid transparent;border-left:3px solid #000"></div>
<div class="t cell" style="left:497.00px;top:365.54px;">StartDate</div>
<div class="t cell" style="left:575.60px;top:365.54px;">date/time</div>
<div class="t cell" style="left:646.70px;top:365.54px;">29</div>
<div class="a" style="left:474.70px;top:378.58px;width:0;height:0;border-top:3.0px solid transparent;border-bottom:3.0px solid transparent;border-left:3px solid #000"></div>
<div class="a" style="left:662.20px;top:378.58px;width:0;height:0;border-top:3.0px solid transparent;border-bottom:3.0px solid transparent;border-left:3px solid #000"></div>
<div class="t cell" style="left:497.00px;top:377.88px;">EndDate</div>
<div class="t cell" style="left:575.60px;top:377.88px;">date/time</div>
<div class="t cell" style="left:646.70px;top:377.88px;">29</div>
<div class="a" style="left:474.70px;top:390.92px;width:0;height:0;border-top:3.0px solid transparent;border-bottom:3.0px solid transparent;border-left:3px solid #000"></div>
<div class="a" style="left:662.20px;top:390.92px;width:0;height:0;border-top:3.0px solid transparent;border-bottom:3.0px solid transparent;border-left:3px solid #000"></div>
<div class="t cell" style="left:497.00px;top:390.22px;">Status</div>
<div class="t cell" style="left:575.60px;top:390.22px;">nstring</div>
<div class="t cell" style="left:646.70px;top:390.22px;">7</div>
<div class="a" style="left:481.50px;top:407.90px;width:176.50px;height:10.80px;background:#f0f0f0"></div>
<div class="a" style="left:497.00px;top:407.90px;width:137.70px;height:10.80px;background:#cdcdcd"></div>
<div class="a" style="left:481.50px;top:419.00px;width:176.20px;height:3.70px;background:#e4e4e4"></div>
<div class="a" style="left:470.20px;top:407.00px;width:11.30px;height:1.00px;background:#a9a9a9"></div>
<div class="a" style="left:657.70px;top:407.00px;width:11.80px;height:1.00px;background:#a9a9a9"></div>
<svg class="a" style="left:486px;top:410px" width="8" height="8" viewBox="0 0 8 8"><path d="M5 1 L2 4 L5 7" fill="none" stroke="#606060" stroke-width="1.3"/></svg>
<svg class="a" style="left:647.5px;top:410px" width="8" height="8" viewBox="0 0 8 8"><path d="M2 1 L5 4 L2 7" fill="none" stroke="#606060" stroke-width="1.3"/></svg>
<svg class="a" style="left:477px;top:123px" width="17" height="26" viewBox="0 0 17 26"><path d="M1 5.5 L6 1 L12 1 L14.8 4.5 L14.8 18 L8 24.2 L1 22.5 Z" fill="#8cc8ff" stroke="#4aa0f8" stroke-width="0.8"/><path d="M3 6 L7 3 L11 3 L13 5.5 L13 9 L3 12 Z" fill="#c8e6ff"/><text x="3.2" y="18" font-size="7" font-weight="bold" fill="#2a70c8" font-family="Liberation Sans">SQ</text></svg>
<div class="a" style="left:730.40px;top:121.80px;width:230.60px;height:304.60px;background:#dcdcdc"></div>
<div class="a" style="left:731.40px;top:122.80px;width:227.10px;height:300.70px;background:#fff"></div>
<div class="a" style="left:958.50px;top:122.80px;width:2.50px;height:303.60px;background:#888"></div>
<div class="a" style="left:730.40px;top:423.50px;width:230.60px;height:2.90px;background:#888"></div>
<div class="a" style="left:732.10px;top:124.00px;width:226.40px;height:27.00px;background:linear-gradient(90deg,#800a80 0%,#860e86 35%,#a048a0 58%,#b468b4 80%,#bc78bc 100%)"></div>
<div class="t" style="left:761.90px;top:125.00px;font-size:11px;transform:scaleX(0.8548);transform-origin:0 0;color:#000;line-height:1;white-space:nowrap">Target_DimProduct (Microsoft SQL Ser...</div>
<div class="t" style="left:761.90px;top:136.00px;font-size:11px;transform:scaleX(0.8492);transform-origin:0 0;color:#000;line-height:1;white-space:nowrap">Target Definition</div>
<div class="a" style="left:934.30px;top:125.70px;width:10.00px;height:9.00px;background:#fff;border:1px solid #8a8a8a;border-top-color:#e8e8e8;border-left-color:#e8e8e8"></div><div class="t" style="left:936.80px;top:126.20px;font-size:8px;font-weight:bold;color:#333">?</div>
<div class="a" style="left:946.60px;top:125.70px;width:10.00px;height:9.00px;background:#fff;border:1px solid #8a8a8a;border-top-color:#e8e8e8;border-left-color:#e8e8e8"></div><div class="a" style="left:949.60px;top:130.70px;width:5.00px;height:2.00px;background:#000"></div>
<div class="a" style="left:732.10px;top:151.00px;width:226.40px;height:272.50px;background:#fff"></div>
<div class="a" style="left:732.10px;top:151.00px;width:11.70px;height:272.50px;background:#f0f0f0;border-right:1px solid #a9a9a9"></div>
<div class="a" style="left:946.20px;top:151.00px;width:12.30px;height:272.50px;background:#f0f0f0;border-right:1px solid #a9a9a9"></div>
<div class="a" style="left:743.80px;top:151.00px;width:15.60px;height:13.50px;background:#f0f0f0;border-right:1px solid #a9a9a9;border-bottom:1px solid #a9a9a9;border-left:1px solid #fff"></div>
<div class="t cell" style="left:750.00px;top:155.20px;">K.</div>
<div class="a" style="left:759.40px;top:151.00px;width:88.60px;height:13.50px;background:#f0f0f0;border-right:1px solid #a9a9a9;border-bottom:1px solid #a9a9a9;border-left:1px solid #fff"></div>
<div class="t cell" style="left:765.30px;top:155.20px;">Name</div>
<div class="a" style="left:848.00px;top:151.00px;width:70.40px;height:13.50px;background:#f0f0f0;border-right:1px solid #a9a9a9;border-bottom:1px solid #a9a9a9;border-left:1px solid #fff"></div>
<div class="t cell" style="left:854.40px;top:155.20px;">Datatype</div>
<div class="a" style="left:918.40px;top:151.00px;width:27.20px;height:13.50px;background:#f0f0f0;border-right:1px solid #a9a9a9;border-bottom:1px solid #a9a9a9;border-left:1px solid #fff"></div>
<div class="t cell" style="left:924.60px;top:155.20px;">L...</div>
<div class="a" style="left:732.10px;top:167.00px;width:11.70px;height:1.00px;background:#a9a9a9"></div>
<div class="a" style="left:732.10px;top:179.00px;width:11.70px;height:1.00px;background:#a9a9a9"></div>
<div class="a" style="left:732.10px;top:192.00px;width:11.70px;height:1.00px;background:#a9a9a9"></div>
<div class="a" style="left:732.10px;top:204.00px;width:11.70px;height:1.00px;background:#a9a9a9"></div>
<div class="a" style="left:732.10px;top:216.00px;width:11.70px;height:1.00px;background:#a9a9a9"></div>
<div class="a" style="left:732.10px;top:229.00px;width:11.70px;height:1.00px;background:#a9a9a9"></div>
<div class="a" style="left:732.10px;top:241.00px;width:11.70px;height:1.00px;background:#a9a9a9"></div>
<div class="a" style="left:732.10px;top:253.00px;width:11.70px;height:1.00px;background:#a9a9a9"></div>
<div class="a" style="left:732.10px;top:266.00px;width:11.70px;height:1.00px;background:#a9a9a9"></div>
<div class="a" style="left:732.10px;top:278.00px;width:11.70px;height:1.00px;background:#a9a9a9"></div>
<div class="a" style="left:732.10px;top:290.00px;width:11.70px;height:1.00px;background:#a9a9a9"></div>
<div class="a" style="left:732.10px;top:303.00px;width:11.70px;height:1.00px;background:#a9a9a9"></div>
<div class="a" style="left:732.10px;top:315.00px;width:11.70px;height:1.00px;background:#a9a9a9"></div>
<div class="a" style="left:732.10px;top:327.00px;width:11.70px;height:1.00px;background:#a9a9a9"></div>
<div class="a" style="left:732.10px;top:340.00px;width:11.70px;height:1.00px;background:#a9a9a9"></div>
<div class="a" style="left:732.10px;top:352.00px;width:11.70px;height:1.00px;background:#a9a9a9"></div>
<div class="a" style="left:732.10px;top:364.00px;width:11.70px;height:1.00px;background:#a9a9a9"></div>
<div class="a" style="left:732.10px;top:377.00px;width:11.70px;height:1.00px;background:#a9a9a9"></div>
<div class="a" style="left:732.10px;top:389.00px;width:11.70px;height:1.00px;background:#a9a9a9"></div>
<div class="a" style="left:732.10px;top:401.00px;width:11.70px;height:1.00px;background:#a9a9a9"></div>
<div class="a" style="left:946.20px;top:167.00px;width:12.30px;height:1.00px;background:#a9a9a9"></div>
<div class="a" style="left:946.20px;top:179.00px;width:12.30px;height:1.00px;background:#a9a9a9"></div>
<div class="a" style="left:946.20px;top:192.00px;width:12.30px;height:1.00px;background:#a9a9a9"></div>
<div class="a" style="left:946.20px;top:204.00px;width:12.30px;height:1.00px;background:#a9a9a9"></div>
<div class="a" style="left:946.20px;top:216.00px;width:12.30px;height:1.00px;background:#a9a9a9"></div>
<div class="a" style="left:946.20px;top:229.00px;width:12.30px;height:1.00px;background:#a9a9a9"></div>
<div class="a" style="left:946.20px;top:241.00px;width:12.30px;height:1.00px;background:#a9a9a9"></div>
<div class="a" style="left:946.20px;top:253.00px;width:12.30px;height:1.00px;background:#a9a9a9"></div>
<div class="a" style="left:946.20px;top:266.00px;width:12.30px;height:1.00px;background:#a9a9a9"></div>
<div class="a" style="left:946.20px;top:278.00px;width:12.30px;height:1.00px;background:#a9a9a9"></div>
<div class="a" style="left:946.20px;top:290.00px;width:12.30px;height:1.00px;background:#a9a9a9"></div>
<div class="a" style="left:946.20px;top:303.00px;width:12.30px;height:1.00px;background:#a9a9a9"></div>
<div class="a" style="left:946.20px;top:315.00px;width:12.30px;height:1.00px;background:#a9a9a9"></div>
<div class="a" style="left:946.20px;top:327.00px;width:12.30px;height:1.00px;background:#a9a9a9"></div>
<div class="a" style="left:946.20px;top:340.00px;width:12.30px;height:1.00px;background:#a9a9a9"></div>
<div class="a" style="left:946.20px;top:352.00px;width:12.30px;height:1.00px;background:#a9a9a9"></div>
<div class="a" style="left:946.20px;top:364.00px;width:12.30px;height:1.00px;background:#a9a9a9"></div>
<div class="a" style="left:946.20px;top:377.00px;width:12.30px;height:1.00px;background:#a9a9a9"></div>
<div class="a" style="left:946.20px;top:389.00px;width:12.30px;height:1.00px;background:#a9a9a9"></div>
<div class="a" style="left:946.20px;top:401.00px;width:12.30px;height:1.00px;background:#a9a9a9"></div>
<div class="a" style="left:743.80px;top:179.00px;width:201.80px;height:1.00px;background:#efefef"></div>
<div class="a" style="left:743.80px;top:192.00px;width:201.80px;height:1.00px;background:#efefef"></div>
<div class="a" style="left:743.80px;top:204.00px;width:201.80px;height:1.00px;background:#efefef"></div>
<div class="a" style="left:743.80px;top:216.00px;width:201.80px;height:1.00px;background:#efefef"></div>
<div class="a" style="left:743.80px;top:229.00px;width:201.80px;height:1.00px;background:#efefef"></div>
<div class="a" style="left:743.80px;top:241.00px;width:201.80px;height:1.00px;background:#efefef"></div>
<div class="a" style="left:743.80px;top:253.00px;width:201.80px;height:1.00px;background:#efefef"></div>
<div class="a" style="left:743.80px;top:266.00px;width:201.80px;height:1.00px;background:#efefef"></div>
<div class="a" style="left:743.80px;top:278.00px;width:201.80px;height:1.00px;background:#efefef"></div>
<div class="a" style="left:743.80px;top:290.00px;width:201.80px;height:1.00px;background:#efefef"></div>
<div class="a" style="left:743.80px;top:303.00px;width:201.80px;height:1.00px;background:#efefef"></div>
<div class="a" style="left:743.80px;top:315.00px;width:201.80px;height:1.00px;background:#efefef"></div>
<div class="a" style="left:743.80px;top:327.00px;width:201.80px;height:1.00px;background:#efefef"></div>
<div class="a" style="left:743.80px;top:340.00px;width:201.80px;height:1.00px;background:#efefef"></div>
<div class="a" style="left:743.80px;top:352.00px;width:201.80px;height:1.00px;background:#efefef"></div>
<div class="a" style="left:743.80px;top:364.00px;width:201.80px;height:1.00px;background:#efefef"></div>
<div class="a" style="left:743.80px;top:377.00px;width:201.80px;height:1.00px;background:#efefef"></div>
<div class="a" style="left:743.80px;top:389.00px;width:201.80px;height:1.00px;background:#efefef"></div>
<div class="a" style="left:743.80px;top:401.00px;width:201.80px;height:1.00px;background:#efefef"></div>
<div class="a" style="left:758.40px;top:167.50px;width:1.00px;height:256.00px;background:#f0f0f0"></div>
<div class="a" style="left:847.00px;top:167.50px;width:1.00px;height:256.00px;background:#f0f0f0"></div>
<div class="a" style="left:917.40px;top:167.50px;width:1.00px;height:256.00px;background:#f0f0f0"></div>
<div class="a" style="left:944.60px;top:167.50px;width:1.00px;height:256.00px;background:#f0f0f0"></div>
<div class="a" style="left:736.60px;top:170.80px;width:0;height:0;border-top:3.0px solid transparent;border-bottom:3.0px solid transparent;border-left:3px solid #000"></div>
<div class="t cell" style="left:765.30px;top:170.10px;">ProductKey</div>
<div class="t cell" style="left:854.40px;top:170.10px;">int</div>
<div class="t cell" style="left:924.60px;top:170.10px;">10</div>
<div class="a" style="left:759.50px;top:170.00px;width:1.00px;height:8.00px;background:#f5dcae"></div>
<div class="a" style="left:736.60px;top:183.14px;width:0;height:0;border-top:3.0px solid transparent;border-bottom:3.0px solid transparent;border-left:3px solid #000"></div>
<div class="t cell" style="left:765.30px;top:182.44px;">EnglishProductN...</div>
<div class="t cell" style="left:854.40px;top:182.44px;">nvarchar</div>
<div class="t cell" style="left:924.60px;top:182.44px;">50</div>
<div class="a" style="left:759.50px;top:182.34px;width:1.00px;height:8.00px;background:#f5dcae"></div>
<div class="a" style="left:736.60px;top:195.48px;width:0;height:0;border-top:3.0px solid transparent;border-bottom:3.0px solid transparent;border-left:3px solid #000"></div>
<div class="t cell" style="left:765.30px;top:194.78px;">StandardCost</div>
<div class="t cell" style="left:854.40px;top:194.78px;">money</div>
<div class="t cell" style="left:924.60px;top:194.78px;">19</div>
<div class="a" style="left:759.50px;top:194.68px;width:1.00px;height:8.00px;background:#f5dcae"></div>
<div class="a" style="left:736.60px;top:207.82px;width:0;height:0;border-top:3.0px solid transparent;border-bottom:3.0px solid transparent;border-left:3px solid #000"></div>
<div class="t cell" style="left:765.30px;top:207.12px;">Color</div>
<div class="t cell" style="left:854.40px;top:207.12px;">nvarchar</div>
<div class="t cell" style="left:924.60px;top:207.12px;">15</div>
<div class="a" style="left:759.50px;top:207.02px;width:1.00px;height:8.00px;background:#f5dcae"></div>
<div class="a" style="left:736.60px;top:220.16px;width:0;height:0;border-top:3.0px solid transparent;border-bottom:3.0px solid transparent;border-left:3px solid #000"></div>
<div class="t cell" style="left:765.30px;top:219.46px;">ReorderPoint</div>
<div class="t cell" style="left:854.40px;top:219.46px;">smallint</div>
<div class="t cell" style="left:924.60px;top:219.46px;">5</div>
<div class="a" style="left:759.50px;top:219.36px;width:1.00px;height:8.00px;background:#f5dcae"></div>
<div class="a" style="left:736.60px;top:232.50px;width:0;height:0;border-top:3.0px solid transparent;border-bottom:3.0px solid transparent;border-left:3px solid #000"></div>
<div class="t cell" style="left:765.30px;top:231.80px;">ListPrice</div>
<div class="t cell" style="left:854.40px;top:231.80px;">money</div>
<div class="t cell" style="left:924.60px;top:231.80px;">19</div>
<div class="a" style="left:759.50px;top:231.70px;width:1.00px;height:8.00px;background:#f5dcae"></div>
<div class="a" style="left:736.60px;top:244.84px;width:0;height:0;border-top:3.0px solid transparent;border-bottom:3.0px solid transparent;border-left:3px solid #000"></div>
<div class="a" style="left:759.40px;top:242.04px;width:186.20px;height:11.34px;background:#f0f0f0"></div>
<div class="t cell" style="left:765.30px;top:244.14px;">Size_FLD</div>
<div class="t cell" style="left:854.40px;top:244.14px;">nvarchar</div>
<div class="t cell" style="left:924.60px;top:244.14px;">50</div>
<div class="a" style="left:759.50px;top:244.04px;width:1.00px;height:8.00px;background:#f5dcae"></div>
<div class="a" style="left:736.60px;top:257.18px;width:0;height:0;border-top:3.0px solid transparent;border-bottom:3.0px solid transparent;border-left:3px solid #000"></div>
<div class="t cell" style="left:765.30px;top:256.48px;">SizeRange</div>
<div class="t cell" style="left:854.40px;top:256.48px;">nvarchar</div>
<div class="t cell" style="left:924.60px;top:256.48px;">50</div>
<div class="a" style="left:759.50px;top:256.38px;width:1.00px;height:8.00px;background:#f5dcae"></div>
<div class="a" style="left:736.60px;top:269.52px;width:0;height:0;border-top:3.0px solid transparent;border-bottom:3.0px solid transparent;border-left:3px solid #000"></div>
<div class="t cell" style="left:765.30px;top:268.82px;">Weight</div>
<div class="t cell" style="left:854.40px;top:268.82px;">float</div>
<div class="t cell" style="left:924.60px;top:268.82px;">15</div>
<div class="a" style="left:759.50px;top:268.72px;width:1.00px;height:8.00px;background:#f5dcae"></div>
<div class="a" style="left:736.60px;top:281.86px;width:0;height:0;border-top:3.0px solid transparent;border-bottom:3.0px solid transparent;border-left:3px solid #000"></div>
<div class="t cell" style="left:765.30px;top:281.16px;">DaysToManufac...</div>
<div class="t cell" style="left:854.40px;top:281.16px;">int</div>
<div class="t cell" style="left:924.60px;top:281.16px;">10</div>
<div class="a" style="left:759.50px;top:281.06px;width:1.00px;height:8.00px;background:#f5dcae"></div>
<div class="a" style="left:736.60px;top:294.20px;width:0;height:0;border-top:3.0px solid transparent;border-bottom:3.0px solid transparent;border-left:3px solid #000"></div>
<div class="t cell" style="left:765.30px;top:293.50px;">ProductLine</div>
<div class="t cell" style="left:854.40px;top:293.50px;">nchar</div>
<div class="t cell" style="left:924.60px;top:293.50px;">2</div>
<div class="a" style="left:759.50px;top:293.40px;width:1.00px;height:8.00px;background:#f5dcae"></div>
<div class="a" style="left:736.60px;top:306.54px;width:0;height:0;border-top:3.0px solid transparent;border-bottom:3.0px solid transparent;border-left:3px solid #000"></div>
<div class="t cell" style="left:765.30px;top:305.84px;">DealerPrice</div>
<div class="t cell" style="left:854.40px;top:305.84px;">money</div>
<div class="t cell" style="left:924.60px;top:305.84px;">19</div>
<div class="a" style="left:759.50px;top:305.74px;width:1.00px;height:8.00px;background:#f5dcae"></div>
<div class="a" style="left:736.60px;top:318.88px;width:0;height:0;border-top:3.0px solid transparent;border-bottom:3.0px solid transparent;border-left:3px solid #000"></div>
<div class="t cell" style="left:765.30px;top:318.18px;">Class</div>
<div class="t cell" style="left:854.40px;top:318.18px;">nchar</div>
<div class="t cell" style="left:924.60px;top:318.18px;">2</div>
<div class="a" style="left:759.50px;top:318.08px;width:1.00px;height:8.00px;background:#f5dcae"></div>
<div class="a" style="left:736.60px;top:331.22px;width:0;height:0;border-top:3.0px solid transparent;border-bottom:3.0px solid transparent;border-left:3px solid #000"></div>
<div class="t cell" style="left:765.30px;top:330.52px;">Style</div>
<div class="t cell" style="left:854.40px;top:330.52px;">nchar</div>
<div class="t cell" style="left:924.60px;top:330.52px;">2</div>
<div class="a" style="left:759.50px;top:330.42px;width:1.00px;height:8.00px;background:#f5dcae"></div>
<div class="a" style="left:736.60px;top:343.56px;width:0;height:0;border-top:3.0px solid transparent;border-bottom:3.0px solid transparent;border-left:3px solid #000"></div>
<div class="t cell" style="left:765.30px;top:342.86px;">ModelName</div>
<div class="t cell" style="left:854.40px;top:342.86px;">nvarchar</div>
<div class="t cell" style="left:924.60px;top:342.86px;">50</div>
<div class="a" style="left:759.50px;top:342.76px;width:1.00px;height:8.00px;background:#f5dcae"></div>
<div class="a" style="left:736.60px;top:355.90px;width:0;height:0;border-top:3.0px solid transparent;border-bottom:3.0px solid transparent;border-left:3px solid #000"></div>
<div class="t cell" style="left:765.30px;top:355.20px;">EnglishDescription</div>
<div class="t cell" style="left:854.40px;top:355.20px;">nvarchar</div>
<div class="t cell" style="left:924.60px;top:355.20px;">400</div>
<div class="a" style="left:759.50px;top:355.10px;width:1.00px;height:8.00px;background:#f5dcae"></div>
<div class="a" style="left:736.60px;top:368.24px;width:0;height:0;border-top:3.0px solid transparent;border-bottom:3.0px solid transparent;border-left:3px solid #000"></div>
<div class="t cell" style="left:765.30px;top:367.54px;">StartDate</div>
<div class="t cell" style="left:854.40px;top:367.54px;">datetime</div>
<div class="t cell" style="left:924.60px;top:367.54px;">23</div>
<div class="a" style="left:759.50px;top:367.44px;width:1.00px;height:8.00px;background:#f5dcae"></div>
<div class="a" style="left:736.60px;top:380.58px;width:0;height:0;border-top:3.0px solid transparent;border-bottom:3.0px solid transparent;border-left:3px solid #000"></div>
<div class="t cell" style="left:765.30px;top:379.88px;">EndDate</div>
<div class="t cell" style="left:854.40px;top:379.88px;">datetime</div>
<div class="t cell" style="left:924.60px;top:379.88px;">23</div>
<div class="a" style="left:759.50px;top:379.78px;width:1.00px;height:8.00px;background:#f5dcae"></div>
<div class="a" style="left:736.60px;top:392.92px;width:0;height:0;border-top:3.0px solid transparent;border-bottom:3.0px solid transparent;border-left:3px solid #000"></div>
<div class="t cell" style="left:765.30px;top:392.22px;">Status</div>
<div class="t cell" style="left:854.40px;top:392.22px;">nvarchar</div>
<div class="t cell" style="left:924.60px;top:392.22px;">7</div>
<div class="a" style="left:759.50px;top:392.12px;width:1.00px;height:8.00px;background:#f5dcae"></div>
<svg class="a" style="left:733px;top:124px" width="26" height="26" viewBox="0 0 26 26"><path d="M9.8 6.7 L23.8 1.6 L23.8 20 L9.8 24.5 Z" fill="#b8b8ff" stroke="#9090f0" stroke-width="0.8"/><path d="M13.3 5.5 V23.3 M16.8 4.2 V22.2 M20.3 2.9 V21" stroke="#7878e8" stroke-width="1.3"/><path d="M11 11 L23 7.5 M11 15 L23 11.5 M11 19 L23 15.5" stroke="#e8f8ff" stroke-width="1"/><path d="M1.5 20.5 L9 15 L8 11.5 L16.5 12 L12.5 19.5 L11 17 L3 23.5 Z" fill="#8ad820" stroke="#3a9a10" stroke-width="0.8"/></svg>
<svg class="a" style="left:267px;top:166.5px" width="7" height="11" viewBox="0 0 7 11"><circle cx="3.5" cy="3.2" r="2.6" fill="#f0d020" stroke="#806000" stroke-width="0.9"/><circle cx="3.5" cy="3" r="0.9" fill="#fff"/><path d="M3.5 5.5 V10" stroke="#806000" stroke-width="1.6"/><path d="M3.5 7.5 H5 M3.5 9 H5" stroke="#806000" stroke-width="1"/></svg>
<svg class="a" style="left:748.5px;top:168.5px" width="7" height="11" viewBox="0 0 7 11"><circle cx="3.5" cy="3.2" r="2.6" fill="#f0d020" stroke="#806000" stroke-width="0.9"/><circle cx="3.5" cy="3" r="0.9" fill="#fff"/><path d="M3.5 5.5 V10" stroke="#806000" stroke-width="1.6"/><path d="M3.5 7.5 H5 M3.5 9 H5" stroke="#806000" stroke-width="1"/></svg>
<div class="a" style="left:483.20px;top:238.20px;width:177.60px;height:14.80px;border:1px solid #b04050"></div>
<div class="a" style="left:758.70px;top:241.20px;width:193.50px;height:13.80px;border:1px solid #a01830"></div>
<div class="a" style="left:743.80px;top:414.00px;width:201.80px;height:1.00px;background:#efefef"></div>
<div class="a" style="left:732.10px;top:421.00px;width:226.40px;height:2.50px;background:#ececec"></div>
<div class="a" style="left:822.40px;top:402.80px;width:43.60px;height:16.20px;background:#ffffe1;border:1px solid #767676"></div>
<div class="t" style="left:825.30px;top:406.00px;font-size:10.5px;transform:scaleX(0.9544);transform-origin:0 0;color:#1a1a1a">EndDate</div>
<svg class="a" style="left:0;top:0" width="971" height="439"><rect x="441.7" y="169.90" width="10.5" height="2.1" fill="#8080ff"/><rect x="441.7" y="172.00" width="10.5" height="2.9" fill="#0000ff"/><rect x="452" y="171.80" width="7.2" height="1.1" fill="#0000ff"/><polygon points="459,167.40 468.6,172.30 459,172.30" fill="#8080ff"/><polygon points="459,172.30 468.6,172.30 459,177.70" fill="#0000ff"/><rect x="671.9" y="170.10" width="10.8" height="2.1" fill="#8080ff"/><rect x="671.9" y="172.10" width="10.8" height="2.8" fill="#0000ff"/><rect x="682.7" y="172.00" width="12.3" height="1.1" fill="#0000ff"/><rect x="695" y="172.80" width="13" height="1.1" fill="#0000ff"/><rect x="708" y="173.80" width="13.2" height="1.1" fill="#0000ff"/><polygon points="721.2,169.60 730.3,174.30 721.2,174.30" fill="#8080ff"/><polygon points="721.2,174.30 730.3,174.30 721.2,179.00" fill="#0000ff"/><rect x="441.7" y="182.24" width="10.5" height="2.1" fill="#8080ff"/><rect x="441.7" y="184.34" width="10.5" height="2.9" fill="#0000ff"/><rect x="452" y="184.14" width="7.2" height="1.1" fill="#0000ff"/><polygon points="459,179.74 468.6,184.64 459,184.64" fill="#8080ff"/><polygon points="459,184.64 468.6,184.64 459,190.04" fill="#0000ff"/><rect x="671.9" y="182.44" width="10.8" height="2.1" fill="#8080ff"/><rect x="671.9" y="184.44" width="10.8" height="2.8" fill="#0000ff"/><rect x="682.7" y="184.34" width="12.3" height="1.1" fill="#0000ff"/><rect x="695" y="185.14" width="13" height="1.1" fill="#0000ff"/><rect x="708" y="186.14" width="13.2" height="1.1" fill="#0000ff"/><polygon points="721.2,181.94 730.3,186.64 721.2,186.64" fill="#8080ff"/><polygon points="721.2,186.64 730.3,186.64 721.2,191.34" fill="#0000ff"/><rect x="441.7" y="194.58" width="10.5" height="2.1" fill="#8080ff"/><rect x="441.7" y="196.68" width="10.5" height="2.9" fill="#0000ff"/><rect x="452" y="196.48" width="7.2" height="1.1" fill="#0000ff"/><polygon points="459,192.08 468.6,196.98 459,196.98" fill="#8080ff"/><polygon points="459,196.98 468.6,196.98 459,202.38" fill="#0000ff"/><rect x="671.9" y="194.78" width="10.8" height="2.1" fill="#8080ff"/><rect x="671.9" y="196.78" width="10.8" height="2.8" fill="#0000ff"/><rect x="682.7" y="196.68" width="12.3" height="1.1" fill="#0000ff"/><rect x="695" y="197.48" width="13" height="1.1" fill="#0000ff"/><rect x="708" y="198.48" width="13.2" height="1.1" fill="#0000ff"/><polygon points="721.2,194.28 730.3,198.98 721.2,198.98" fill="#8080ff"/><polygon points="721.2,198.98 730.3,198.98 721.2,203.68" fill="#0000ff"/><rect x="441.7" y="206.92" width="10.5" height="2.1" fill="#8080ff"/><rect x="441.7" y="209.02" width="10.5" height="2.9" fill="#0000ff"/><rect x="452" y="208.82" width="7.2" height="1.1" fill="#0000ff"/><polygon points="459,204.42 468.6,209.32 459,209.32" fill="#8080ff"/><polygon points="459,209.32 468.6,209.32 459,214.72" fill="#0000ff"/><rect x="671.9" y="207.12" width="10.8" height="2.1" fill="#8080ff"/><rect x="671.9" y="209.12" width="10.8" height="2.8" fill="#0000ff"/><rect x="682.7" y="209.02" width="12.3" height="1.1" fill="#0000ff"/><rect x="695" y="209.82" width="13" height="1.1" fill="#0000ff"/><rect x="708" y="210.82" width="13.2" height="1.1" fill="#0000ff"/><polygon points="721.2,206.62 730.3,211.32 721.2,211.32" fill="#8080ff"/><polygon points="721.2,211.32 730.3,211.32 721.2,216.02" fill="#0000ff"/><rect x="441.7" y="219.26" width="10.5" height="2.1" fill="#8080ff"/><rect x="441.7" y="221.36" width="10.5" height="2.9" fill="#0000ff"/><rect x="452" y="221.16" width="7.2" height="1.1" fill="#0000ff"/><polygon points="459,216.76 468.6,221.66 459,221.66" fill="#8080ff"/><polygon points="459,221.66 468.6,221.66 459,227.06" fill="#0000ff"/><rect x="671.9" y="219.46" width="10.8" height="2.1" fill="#8080ff"/><rect x="671.9" y="221.46" width="10.8" height="2.8" fill="#0000ff"/><rect x="682.7" y="221.36" width="12.3" height="1.1" fill="#0000ff"/><rect x="695" y="222.16" width="13" height="1.1" fill="#0000ff"/><rect x="708" y="223.16" width="13.2" height="1.1" fill="#0000ff"/><polygon points="721.2,218.96 730.3,223.66 721.2,223.66" fill="#8080ff"/><polygon points="721.2,223.66 730.3,223.66 721.2,228.36" fill="#0000ff"/><rect x="441.7" y="231.60" width="10.5" height="2.1" fill="#8080ff"/><rect x="441.7" y="233.70" width="10.5" height="2.9" fill="#0000ff"/><rect x="452" y="233.50" width="7.2" height="1.1" fill="#0000ff"/><polygon points="459,229.10 468.6,234.00 459,234.00" fill="#8080ff"/><polygon points="459,234.00 468.6,234.00 459,239.40" fill="#0000ff"/><rect x="671.9" y="231.80" width="10.8" height="2.1" fill="#8080ff"/><rect x="671.9" y="233.80" width="10.8" height="2.8" fill="#0000ff"/><rect x="682.7" y="233.70" width="12.3" height="1.1" fill="#0000ff"/><rect x="695" y="234.50" width="13" height="1.1" fill="#0000ff"/><rect x="708" y="235.50" width="13.2" height="1.1" fill="#0000ff"/><polygon points="721.2,231.30 730.3,236.00 721.2,236.00" fill="#8080ff"/><polygon points="721.2,236.00 730.3,236.00 721.2,240.70" fill="#0000ff"/><rect x="441.7" y="243.94" width="10.5" height="2.1" fill="#8080ff"/><rect x="441.7" y="246.04" width="10.5" height="2.9" fill="#0000ff"/><rect x="452" y="245.84" width="7.2" height="1.1" fill="#0000ff"/><polygon points="459,241.44 468.6,246.34 459,246.34" fill="#8080ff"/><polygon points="459,246.34 468.6,246.34 459,251.74" fill="#0000ff"/><rect x="671.9" y="244.14" width="10.8" height="2.1" fill="#8080ff"/><rect x="671.9" y="246.14" width="10.8" height="2.8" fill="#0000ff"/><rect x="682.7" y="246.04" width="12.3" height="1.1" fill="#0000ff"/><rect x="695" y="246.84" width="13" height="1.1" fill="#0000ff"/><rect x="708" y="247.84" width="13.2" height="1.1" fill="#0000ff"/><polygon points="721.2,243.64 730.3,248.34 721.2,248.34" fill="#8080ff"/><polygon points="721.2,248.34 730.3,248.34 721.2,253.04" fill="#0000ff"/><rect x="441.7" y="256.28" width="10.5" height="2.1" fill="#8080ff"/><rect x="441.7" y="258.38" width="10.5" height="2.9" fill="#0000ff"/><rect x="452" y="258.18" width="7.2" height="1.1" fill="#0000ff"/><polygon points="459,253.78 468.6,258.68 459,258.68" fill="#8080ff"/><polygon points="459,258.68 468.6,258.68 459,264.08" fill="#0000ff"/><rect x="671.9" y="256.48" width="10.8" height="2.1" fill="#8080ff"/><rect x="671.9" y="258.48" width="10.8" height="2.8" fill="#0000ff"/><rect x="682.7" y="258.38" width="12.3" height="1.1" fill="#0000ff"/><rect x="695" y="259.18" width="13" height="1.1" fill="#0000ff"/><rect x="708" y="260.18" width="13.2" height="1.1" fill="#0000ff"/><polygon points="721.2,255.98 730.3,260.68 721.2,260.68" fill="#8080ff"/><polygon points="721.2,260.68 730.3,260.68 721.2,265.38" fill="#0000ff"/><rect x="441.7" y="268.62" width="10.5" height="2.1" fill="#8080ff"/><rect x="441.7" y="270.72" width="10.5" height="2.9" fill="#0000ff"/><rect x="452" y="270.52" width="7.2" height="1.1" fill="#0000ff"/><polygon points="459,266.12 468.6,271.02 459,271.02" fill="#8080ff"/><polygon points="459,271.02 468.6,271.02 459,276.42" fill="#0000ff"/><rect x="671.9" y="268.82" width="10.8" height="2.1" fill="#8080ff"/><rect x="671.9" y="270.82" width="10.8" height="2.8" fill="#0000ff"/><rect x="682.7" y="270.72" width="12.3" height="1.1" fill="#0000ff"/><rect x="695" y="271.52" width="13" height="1.1" fill="#0000ff"/><rect x="708" y="272.52" width="13.2" height="1.1" fill="#0000ff"/><polygon points="721.2,268.32 730.3,273.02 721.2,273.02" fill="#8080ff"/><polygon points="721.2,273.02 730.3,273.02 721.2,277.72" fill="#0000ff"/><rect x="441.7" y="280.96" width="10.5" height="2.1" fill="#8080ff"/><rect x="441.7" y="283.06" width="10.5" height="2.9" fill="#0000ff"/><rect x="452" y="282.86" width="7.2" height="1.1" fill="#0000ff"/><polygon points="459,278.46 468.6,283.36 459,283.36" fill="#8080ff"/><polygon points="459,283.36 468.6,283.36 459,288.76" fill="#0000ff"/><rect x="671.9" y="281.16" width="10.8" height="2.1" fill="#8080ff"/><rect x="671.9" y="283.16" width="10.8" height="2.8" fill="#0000ff"/><rect x="682.7" y="283.06" width="12.3" height="1.1" fill="#0000ff"/><rect x="695" y="283.86" width="13" height="1.1" fill="#0000ff"/><rect x="708" y="284.86" width="13.2" height="1.1" fill="#0000ff"/><polygon points="721.2,280.66 730.3,285.36 721.2,285.36" fill="#8080ff"/><polygon points="721.2,285.36 730.3,285.36 721.2,290.06" fill="#0000ff"/><rect x="441.7" y="293.30" width="10.5" height="2.1" fill="#8080ff"/><rect x="441.7" y="295.40" width="10.5" height="2.9" fill="#0000ff"/><rect x="452" y="295.20" width="7.2" height="1.1" fill="#0000ff"/><polygon points="459,290.80 468.6,295.70 459,295.70" fill="#8080ff"/><polygon points="459,295.70 468.6,295.70 459,301.10" fill="#0000ff"/><rect x="671.9" y="293.50" width="10.8" height="2.1" fill="#8080ff"/><rect x="671.9" y="295.50" width="10.8" height="2.8" fill="#0000ff"/><rect x="682.7" y="295.40" width="12.3" height="1.1" fill="#0000ff"/><rect x="695" y="296.20" width="13" height="1.1" fill="#0000ff"/><rect x="708" y="297.20" width="13.2" height="1.1" fill="#0000ff"/><polygon points="721.2,293.00 730.3,297.70 721.2,297.70" fill="#8080ff"/><polygon points="721.2,297.70 730.3,297.70 721.2,302.40" fill="#0000ff"/><rect x="441.7" y="305.64" width="10.5" height="2.1" fill="#8080ff"/><rect x="441.7" y="307.74" width="10.5" height="2.9" fill="#0000ff"/><rect x="452" y="307.54" width="7.2" height="1.1" fill="#0000ff"/><polygon points="459,303.14 468.6,308.04 459,308.04" fill="#8080ff"/><polygon points="459,308.04 468.6,308.04 459,313.44" fill="#0000ff"/><rect x="671.9" y="305.84" width="10.8" height="2.1" fill="#8080ff"/><rect x="671.9" y="307.84" width="10.8" height="2.8" fill="#0000ff"/><rect x="682.7" y="307.74" width="12.3" height="1.1" fill="#0000ff"/><rect x="695" y="308.54" width="13" height="1.1" fill="#0000ff"/><rect x="708" y="309.54" width="13.2" height="1.1" fill="#0000ff"/><polygon points="721.2,305.34 730.3,310.04 721.2,310.04" fill="#8080ff"/><polygon points="721.2,310.04 730.3,310.04 721.2,314.74" fill="#0000ff"/><rect x="441.7" y="317.98" width="10.5" height="2.1" fill="#8080ff"/><rect x="441.7" y="320.08" width="10.5" height="2.9" fill="#0000ff"/><rect x="452" y="319.88" width="7.2" height="1.1" fill="#0000ff"/><polygon points="459,315.48 468.6,320.38 459,320.38" fill="#8080ff"/><polygon points="459,320.38 468.6,320.38 459,325.78" fill="#0000ff"/><rect x="671.9" y="318.18" width="10.8" height="2.1" fill="#8080ff"/><rect x="671.9" y="320.18" width="10.8" height="2.8" fill="#0000ff"/><rect x="682.7" y="320.08" width="12.3" height="1.1" fill="#0000ff"/><rect x="695" y="320.88" width="13" height="1.1" fill="#0000ff"/><rect x="708" y="321.88" width="13.2" height="1.1" fill="#0000ff"/><polygon points="721.2,317.68 730.3,322.38 721.2,322.38" fill="#8080ff"/><polygon points="721.2,322.38 730.3,322.38 721.2,327.08" fill="#0000ff"/><rect x="441.7" y="330.32" width="10.5" height="2.1" fill="#8080ff"/><rect x="441.7" y="332.42" width="10.5" height="2.9" fill="#0000ff"/><rect x="452" y="332.22" width="7.2" height="1.1" fill="#0000ff"/><polygon points="459,327.82 468.6,332.72 459,332.72" fill="#8080ff"/><polygon points="459,332.72 468.6,332.72 459,338.12" fill="#0000ff"/><rect x="671.9" y="330.52" width="10.8" height="2.1" fill="#8080ff"/><rect x="671.9" y="332.52" width="10.8" height="2.8" fill="#0000ff"/><rect x="682.7" y="332.42" width="12.3" height="1.1" fill="#0000ff"/><rect x="695" y="333.22" width="13" height="1.1" fill="#0000ff"/><rect x="708" y="334.22" width="13.2" height="1.1" fill="#0000ff"/><polygon points="721.2,330.02 730.3,334.72 721.2,334.72" fill="#8080ff"/><polygon points="721.2,334.72 730.3,334.72 721.2,339.42" fill="#0000ff"/><rect x="441.7" y="342.66" width="10.5" height="2.1" fill="#8080ff"/><rect x="441.7" y="344.76" width="10.5" height="2.9" fill="#0000ff"/><rect x="452" y="344.56" width="7.2" height="1.1" fill="#0000ff"/><polygon points="459,340.16 468.6,345.06 459,345.06" fill="#8080ff"/><polygon points="459,345.06 468.6,345.06 459,350.46" fill="#0000ff"/><rect x="671.9" y="342.86" width="10.8" height="2.1" fill="#8080ff"/><rect x="671.9" y="344.86" width="10.8" height="2.8" fill="#0000ff"/><rect x="682.7" y="344.76" width="12.3" height="1.1" fill="#0000ff"/><rect x="695" y="345.56" width="13" height="1.1" fill="#0000ff"/><rect x="708" y="346.56" width="13.2" height="1.1" fill="#0000ff"/><polygon points="721.2,342.36 730.3,347.06 721.2,347.06" fill="#8080ff"/><polygon points="721.2,347.06 730.3,347.06 721.2,351.76" fill="#0000ff"/><rect x="441.7" y="355.00" width="10.5" height="2.1" fill="#8080ff"/><rect x="441.7" y="357.10" width="10.5" height="2.9" fill="#0000ff"/><rect x="452" y="356.90" width="7.2" height="1.1" fill="#0000ff"/><polygon points="459,352.50 468.6,357.40 459,357.40" fill="#8080ff"/><polygon points="459,357.40 468.6,357.40 459,362.80" fill="#0000ff"/><rect x="671.9" y="355.20" width="10.8" height="2.1" fill="#8080ff"/><rect x="671.9" y="357.20" width="10.8" height="2.8" fill="#0000ff"/><rect x="682.7" y="357.10" width="12.3" height="1.1" fill="#0000ff"/><rect x="695" y="357.90" width="13" height="1.1" fill="#0000ff"/><rect x="708" y="358.90" width="13.2" height="1.1" fill="#0000ff"/><polygon points="721.2,354.70 730.3,359.40 721.2,359.40" fill="#8080ff"/><polygon points="721.2,359.40 730.3,359.40 721.2,364.10" fill="#0000ff"/><rect x="441.7" y="367.34" width="10.5" height="2.1" fill="#8080ff"/><rect x="441.7" y="369.44" width="10.5" height="2.9" fill="#0000ff"/><rect x="452" y="369.24" width="7.2" height="1.1" fill="#0000ff"/><polygon points="459,364.84 468.6,369.74 459,369.74" fill="#8080ff"/><polygon points="459,369.74 468.6,369.74 459,375.14" fill="#0000ff"/><rect x="671.9" y="367.54" width="10.8" height="2.1" fill="#8080ff"/><rect x="671.9" y="369.54" width="10.8" height="2.8" fill="#0000ff"/><rect x="682.7" y="369.44" width="12.3" height="1.1" fill="#0000ff"/><rect x="695" y="370.24" width="13" height="1.1" fill="#0000ff"/><rect x="708" y="371.24" width="13.2" height="1.1" fill="#0000ff"/><polygon points="721.2,367.04 730.3,371.74 721.2,371.74" fill="#8080ff"/><polygon points="721.2,371.74 730.3,371.74 721.2,376.44" fill="#0000ff"/><rect x="441.7" y="379.68" width="10.5" height="2.1" fill="#8080ff"/><rect x="441.7" y="381.78" width="10.5" height="2.9" fill="#0000ff"/><rect x="452" y="381.58" width="7.2" height="1.1" fill="#0000ff"/><polygon points="459,377.18 468.6,382.08 459,382.08" fill="#8080ff"/><polygon points="459,382.08 468.6,382.08 459,387.48" fill="#0000ff"/><rect x="671.9" y="379.88" width="10.8" height="2.1" fill="#8080ff"/><rect x="671.9" y="381.88" width="10.8" height="2.8" fill="#0000ff"/><rect x="682.7" y="381.78" width="12.3" height="1.1" fill="#0000ff"/><rect x="695" y="382.58" width="13" height="1.1" fill="#0000ff"/><rect x="708" y="383.58" width="13.2" height="1.1" fill="#0000ff"/><polygon points="721.2,379.38 730.3,384.08 721.2,384.08" fill="#8080ff"/><polygon points="721.2,384.08 730.3,384.08 721.2,388.78" fill="#0000ff"/><rect x="441.7" y="392.02" width="10.5" height="2.1" fill="#8080ff"/><rect x="441.7" y="394.12" width="10.5" height="2.9" fill="#0000ff"/><rect x="452" y="393.92" width="7.2" height="1.1" fill="#0000ff"/><polygon points="459,389.52 468.6,394.42 459,394.42" fill="#8080ff"/><polygon points="459,394.42 468.6,394.42 459,399.82" fill="#0000ff"/><rect x="671.9" y="392.22" width="10.8" height="2.1" fill="#8080ff"/><rect x="671.9" y="394.22" width="10.8" height="2.8" fill="#0000ff"/><rect x="682.7" y="394.12" width="12.3" height="1.1" fill="#0000ff"/><rect x="695" y="394.92" width="13" height="1.1" fill="#0000ff"/><rect x="708" y="395.92" width="13.2" height="1.1" fill="#0000ff"/><polygon points="721.2,391.72 730.3,396.42 721.2,396.42" fill="#8080ff"/><polygon points="721.2,396.42 730.3,396.42 721.2,401.12" fill="#0000ff"/></svg>
</body></html>
